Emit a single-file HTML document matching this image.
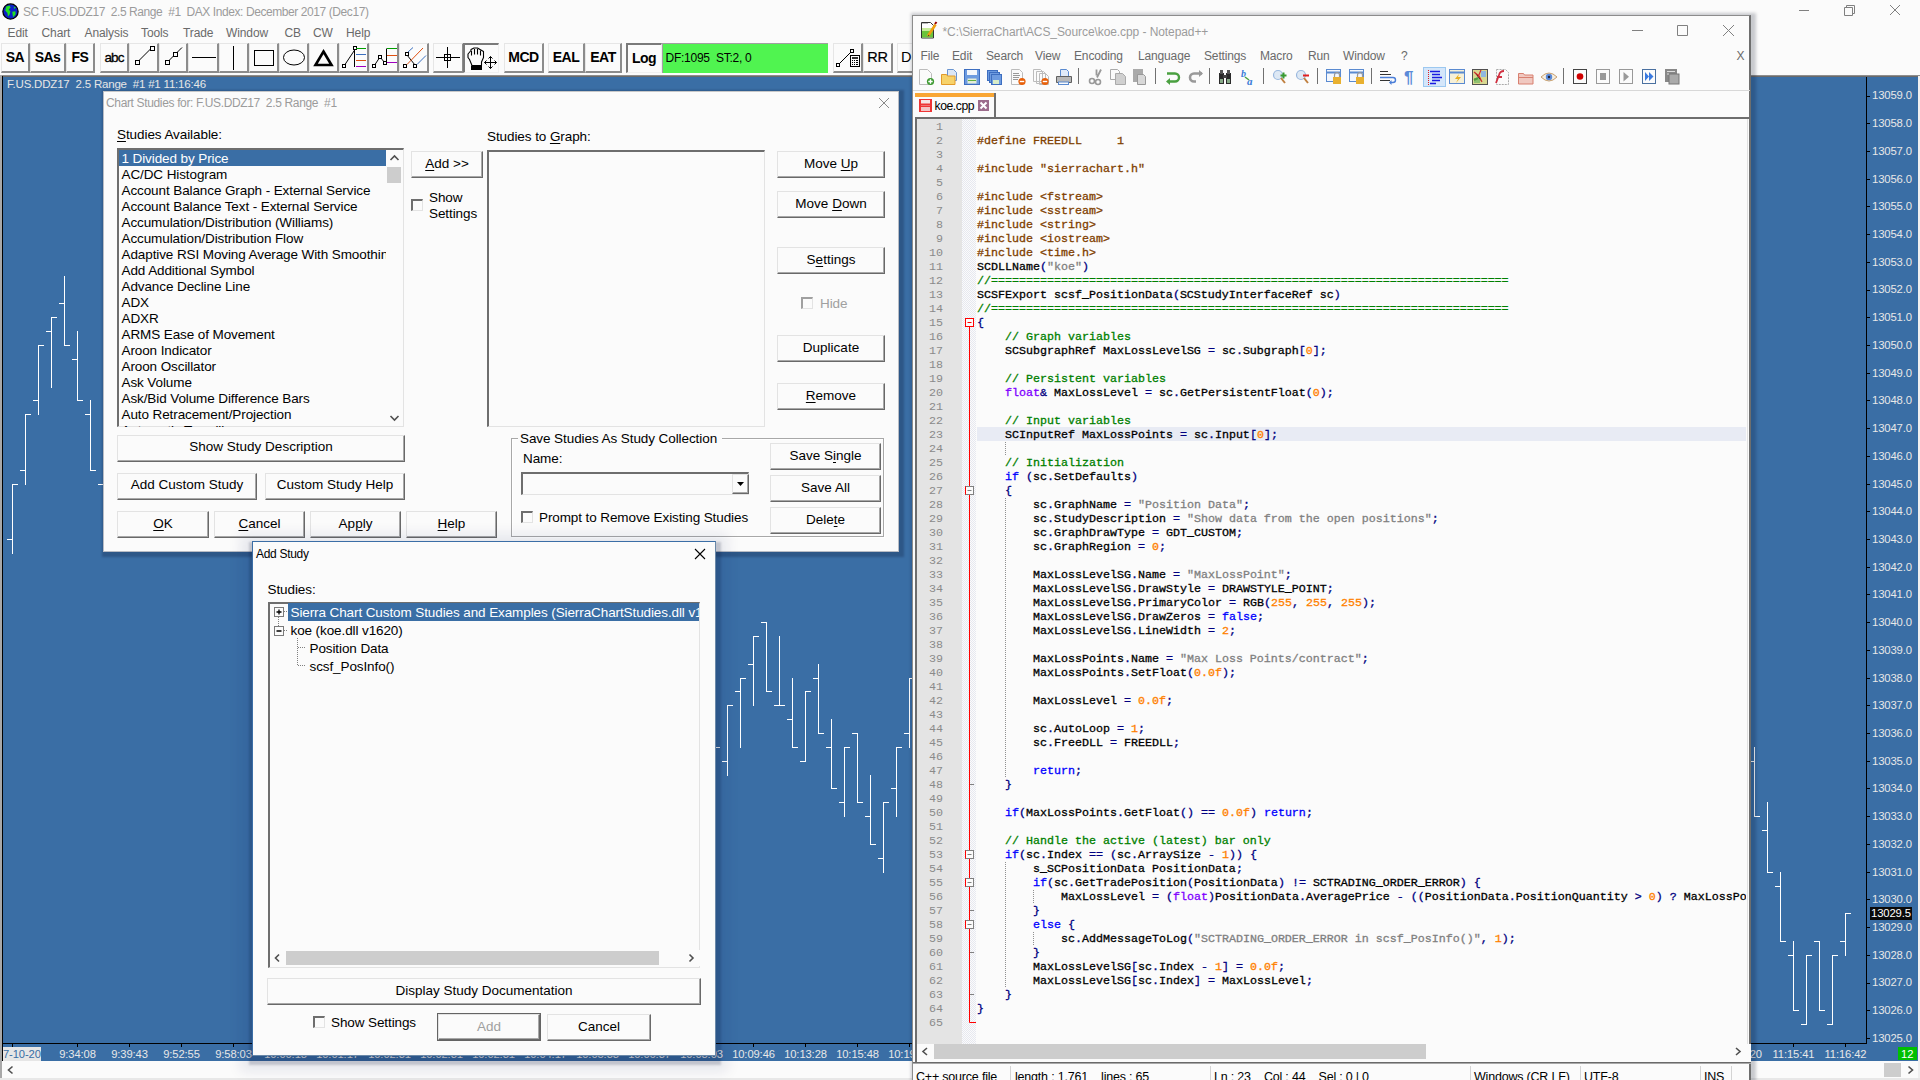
<!DOCTYPE html>
<html><head><meta charset="utf-8">
<style>
*{box-sizing:border-box;margin:0;padding:0}
html,body{width:1920px;height:1080px;overflow:hidden;background:#fbfbfb;font-family:"Liberation Sans",sans-serif;color:#000}
.a{position:absolute}
.t{position:absolute;white-space:pre;line-height:1}
.btn{position:absolute;background:#fbfbfb;border-top:1px solid #e3e3e3;border-left:1px solid #e3e3e3;border-right:1px solid #696969;border-bottom:1px solid #696969;box-shadow:inset -1px -1px 0 #a8a8a8}
.code{font-size:11.67px;font-family:'Liberation Mono',monospace;-webkit-text-stroke:0.3px currentColor}
.code span{-webkit-text-stroke:0.3px currentColor}
.code b{-webkit-text-stroke:0}
u{text-decoration:underline;text-underline-offset:2px;text-decoration-thickness:1px}
</style></head><body>
<svg class="a" style="left:1px;top:2px" width="19" height="19" viewBox="0 0 19 19"><circle cx="9.5" cy="9.5" r="7.6" fill="#0b21c8" stroke="#000" stroke-width="1.3"/><path d="M5.2 4.6 L8.6 3.4 L9.6 5.6 L7.8 7.6 L9.4 9.6 L8.6 12.4 L7 14.6 L6.4 11 L4.2 8.4Z M11.2 9.8 L14.4 9.2 L14.6 12.6 L12 15.2Z M12.6 4.4 L14.8 5.6 L13.4 7Z" fill="#22e022"/></svg><div class="t" style="left:23px;top:6.04px;font-size:12px;color:#9b9b9b;font-weight:400;font-family:'Liberation Sans',sans-serif;letter-spacing:-0.42px">SC F.US.DDZ17  2.5 Range  #1  DAX Index: December 2017 (Dec17)</div><svg class="a" style="left:1790px;top:0" width="130" height="22"><path d="M9 10.5h10" stroke="#808080" stroke-width="1"/><path d="M54.5 7.5h8v8h-8z M56.5 7.5v-2h8v8h-2" fill="none" stroke="#808080"/><path d="M100 5l10 10 M110 5l-10 10" stroke="#808080"/></svg><div class="t" style="left:7.5px;top:26.84px;font-size:12px;color:#6a6a6a;font-weight:400;font-family:'Liberation Sans',sans-serif;letter-spacing:-0.1px">Edit</div><div class="t" style="left:41.5px;top:26.84px;font-size:12px;color:#6a6a6a;font-weight:400;font-family:'Liberation Sans',sans-serif;letter-spacing:-0.1px">Chart</div><div class="t" style="left:84.5px;top:26.84px;font-size:12px;color:#6a6a6a;font-weight:400;font-family:'Liberation Sans',sans-serif;letter-spacing:-0.1px">Analysis</div><div class="t" style="left:141px;top:26.84px;font-size:12px;color:#6a6a6a;font-weight:400;font-family:'Liberation Sans',sans-serif;letter-spacing:-0.1px">Tools</div><div class="t" style="left:183px;top:26.84px;font-size:12px;color:#6a6a6a;font-weight:400;font-family:'Liberation Sans',sans-serif;letter-spacing:-0.1px">Trade</div><div class="t" style="left:226px;top:26.84px;font-size:12px;color:#6a6a6a;font-weight:400;font-family:'Liberation Sans',sans-serif;letter-spacing:-0.1px">Window</div><div class="t" style="left:284.5px;top:26.84px;font-size:12px;color:#6a6a6a;font-weight:400;font-family:'Liberation Sans',sans-serif;letter-spacing:-0.1px">CB</div><div class="t" style="left:313px;top:26.84px;font-size:12px;color:#6a6a6a;font-weight:400;font-family:'Liberation Sans',sans-serif;letter-spacing:-0.1px">CW</div><div class="t" style="left:346px;top:26.84px;font-size:12px;color:#6a6a6a;font-weight:400;font-family:'Liberation Sans',sans-serif;letter-spacing:-0.1px">Help</div><div class="a" style="left:1px;top:43px;width:29px;height:30px;background:#fbfbfb;border-top:1px solid #e6e6e6;border-left:1px solid #e6e6e6;border-right:2px solid #8c8c8c;border-bottom:2px solid #8c8c8c"></div><div class="a" style="left:30px;top:43px;width:36px;height:30px;background:#fbfbfb;border-top:1px solid #e6e6e6;border-left:1px solid #e6e6e6;border-right:2px solid #8c8c8c;border-bottom:2px solid #8c8c8c"></div><div class="a" style="left:66px;top:43px;width:29px;height:30px;background:#fbfbfb;border-top:1px solid #e6e6e6;border-left:1px solid #e6e6e6;border-right:2px solid #8c8c8c;border-bottom:2px solid #8c8c8c"></div><div class="a" style="left:100px;top:43px;width:29px;height:30px;background:#fbfbfb;border-top:1px solid #e6e6e6;border-left:1px solid #e6e6e6;border-right:2px solid #8c8c8c;border-bottom:2px solid #8c8c8c"></div><div class="a" style="left:129px;top:43px;width:30px;height:30px;background:#fbfbfb;border-top:1px solid #e6e6e6;border-left:1px solid #e6e6e6;border-right:2px solid #8c8c8c;border-bottom:2px solid #8c8c8c"></div><div class="a" style="left:159px;top:43px;width:29px;height:30px;background:#fbfbfb;border-top:1px solid #e6e6e6;border-left:1px solid #e6e6e6;border-right:2px solid #8c8c8c;border-bottom:2px solid #8c8c8c"></div><div class="a" style="left:188px;top:43px;width:31px;height:30px;background:#fbfbfb;border-top:1px solid #e6e6e6;border-left:1px solid #e6e6e6;border-right:2px solid #8c8c8c;border-bottom:2px solid #8c8c8c"></div><div class="a" style="left:219px;top:43px;width:30px;height:30px;background:#fbfbfb;border-top:1px solid #e6e6e6;border-left:1px solid #e6e6e6;border-right:2px solid #8c8c8c;border-bottom:2px solid #8c8c8c"></div><div class="a" style="left:249px;top:43px;width:30px;height:30px;background:#fbfbfb;border-top:1px solid #e6e6e6;border-left:1px solid #e6e6e6;border-right:2px solid #8c8c8c;border-bottom:2px solid #8c8c8c"></div><div class="a" style="left:279px;top:43px;width:30px;height:30px;background:#fbfbfb;border-top:1px solid #e6e6e6;border-left:1px solid #e6e6e6;border-right:2px solid #8c8c8c;border-bottom:2px solid #8c8c8c"></div><div class="a" style="left:309px;top:43px;width:30px;height:30px;background:#fbfbfb;border-top:1px solid #e6e6e6;border-left:1px solid #e6e6e6;border-right:2px solid #8c8c8c;border-bottom:2px solid #8c8c8c"></div><div class="a" style="left:339px;top:43px;width:30px;height:30px;background:#fbfbfb;border-top:1px solid #e6e6e6;border-left:1px solid #e6e6e6;border-right:2px solid #8c8c8c;border-bottom:2px solid #8c8c8c"></div><div class="a" style="left:369px;top:43px;width:30px;height:30px;background:#fbfbfb;border-top:1px solid #e6e6e6;border-left:1px solid #e6e6e6;border-right:2px solid #8c8c8c;border-bottom:2px solid #8c8c8c"></div><div class="a" style="left:399px;top:43px;width:30px;height:30px;background:#fbfbfb;border-top:1px solid #e6e6e6;border-left:1px solid #e6e6e6;border-right:2px solid #8c8c8c;border-bottom:2px solid #8c8c8c"></div><div class="a" style="left:433px;top:43px;width:31px;height:30px;background:#fbfbfb;border-top:1px solid #e6e6e6;border-left:1px solid #e6e6e6;border-right:2px solid #8c8c8c;border-bottom:2px solid #8c8c8c"></div><div class="a" style="left:463px;top:43px;width:36px;height:30px;background:#fbfbfb;border-top:2px solid #7a7a7a;border-left:2px solid #7a7a7a;border-right:1px solid #f0f0f0;border-bottom:1px solid #f0f0f0"></div><div class="a" style="left:504px;top:43px;width:40px;height:30px;background:#fbfbfb;border-top:1px solid #e6e6e6;border-left:1px solid #e6e6e6;border-right:2px solid #8c8c8c;border-bottom:2px solid #8c8c8c"></div><div class="a" style="left:548px;top:43px;width:37px;height:30px;background:#fbfbfb;border-top:1px solid #e6e6e6;border-left:1px solid #e6e6e6;border-right:2px solid #8c8c8c;border-bottom:2px solid #8c8c8c"></div><div class="a" style="left:585px;top:43px;width:37px;height:30px;background:#fbfbfb;border-top:1px solid #e6e6e6;border-left:1px solid #e6e6e6;border-right:2px solid #8c8c8c;border-bottom:2px solid #8c8c8c"></div><div class="a" style="left:626px;top:43px;width:36px;height:30px;background:#fbfbfb;border-top:2px solid #7a7a7a;border-left:2px solid #7a7a7a;border-right:1px solid #f0f0f0;border-bottom:1px solid #f0f0f0"></div><div class="a" style="left:833px;top:43px;width:30px;height:30px;background:#fbfbfb;border-top:1px solid #e6e6e6;border-left:1px solid #e6e6e6;border-right:2px solid #8c8c8c;border-bottom:2px solid #8c8c8c"></div><div class="a" style="left:863px;top:43px;width:30px;height:30px;background:#fbfbfb;border-top:1px solid #e6e6e6;border-left:1px solid #e6e6e6;border-right:2px solid #8c8c8c;border-bottom:2px solid #8c8c8c"></div><div class="a" style="left:897px;top:43px;width:34px;height:30px;background:#fbfbfb;border-top:1px solid #e6e6e6;border-left:1px solid #e6e6e6;border-right:2px solid #8c8c8c;border-bottom:2px solid #8c8c8c"></div><div class="t" style="left:0.5px;width:29px;text-align:center;top:50.15px;font-size:14px;color:#000;font-weight:700;font-family:'Liberation Sans',sans-serif;letter-spacing:-0.5px">SA</div><div class="t" style="left:29.5px;width:36px;text-align:center;top:50.15px;font-size:14px;color:#000;font-weight:700;font-family:'Liberation Sans',sans-serif;letter-spacing:-0.5px">SAs</div><div class="t" style="left:65.5px;width:29px;text-align:center;top:50.15px;font-size:14px;color:#000;font-weight:700;font-family:'Liberation Sans',sans-serif;letter-spacing:-0.5px">FS</div><div class="t" style="left:503.5px;width:40px;text-align:center;top:50.15px;font-size:14px;color:#000;font-weight:700;font-family:'Liberation Sans',sans-serif;letter-spacing:-0.5px">MCD</div><div class="t" style="left:547.5px;width:37px;text-align:center;top:50.15px;font-size:14px;color:#000;font-weight:700;font-family:'Liberation Sans',sans-serif;letter-spacing:-0.5px">EAL</div><div class="t" style="left:584.5px;width:37px;text-align:center;top:50.15px;font-size:14px;color:#000;font-weight:700;font-family:'Liberation Sans',sans-serif;letter-spacing:-0.5px">EAT</div><div class="t" style="left:862.5px;width:30px;text-align:center;top:49.73px;font-size:14.5px;color:#000;font-weight:400;font-family:'Liberation Sans',sans-serif;letter-spacing:-0.3px;-webkit-text-stroke:0.2px #000">RR</div><div class="t" style="left:901px;top:49.73px;font-size:14.5px;color:#000;font-weight:400;font-family:'Liberation Sans',sans-serif;">Dr</div><div class="t" style="left:100.0px;width:28px;text-align:center;top:50.57px;font-size:13.5px;color:#000;font-weight:400;font-family:'Liberation Sans',sans-serif;letter-spacing:-0.9px;-webkit-text-stroke:0.3px #000">abc</div><div class="t" style="left:626.0px;width:36px;text-align:center;top:51.15px;font-size:14px;color:#000;font-weight:700;font-family:'Liberation Sans',sans-serif;letter-spacing:-0.5px">Log</div><svg class="a" style="left:0;top:40px" width="920" height="36" viewBox="0 40 920 36">
<g fill="none" stroke="#000" stroke-width="1">
<path d="M137 62.5 L150.5 49"/><rect x="135.5" y="60.5" width="4" height="4" fill="#fbfbfb"/><rect x="150.5" y="46.5" width="4" height="4" fill="#fbfbfb"/>
<path d="M167 62.5 L182 47.5"/><rect x="165.5" y="60.5" width="4" height="4" fill="#fbfbfb"/><rect x="173.5" y="52.5" width="4" height="4" fill="#fbfbfb"/>
<path d="M192 57.5h24"/>
<path d="M233.5 46v24"/>
<rect x="254.5" y="50.5" width="19" height="15" />
<ellipse cx="294" cy="57.5" rx="10.5" ry="7.5"/>
<path d="M323.5 51.5 L331.5 65 L315.5 65Z" stroke-width="2.6" stroke-linejoin="miter"/>
<path d="M344 66 L355 49.5 M354.5 48 V67"/><rect x="342.5" y="64.5" width="3" height="3" fill="#fbfbfb"/><rect x="353.5" y="46.5" width="3" height="3" fill="#fbfbfb"/>
<path d="M374 66 L380 57 L385 63 M386.5 48.5 V63"/><rect x="372.5" y="64.5" width="3" height="3" fill="#fbfbfb"/><rect x="378.5" y="55.5" width="3" height="3" fill="#fbfbfb"/><rect x="383.5" y="61.5" width="3" height="3" fill="#fbfbfb"/>
<path d="M407 55 L415 65"/><rect x="405.5" y="52.5" width="3" height="3" fill="#fbfbfb"/><rect x="413.5" y="64.5" width="3" height="3" fill="#fbfbfb"/><rect x="403.5" y="64.5" width="3" height="3" fill="#fbfbfb"/>
<path d="M436 57.5h24 M447.5 47v21"/><rect x="444.5" y="54.5" width="6" height="6"/>
<path d="M838 65 L852 51"/><rect x="836.5" y="63.5" width="3" height="3" fill="#fbfbfb"/><rect x="850.5" y="49.5" width="3" height="3" fill="#fbfbfb"/><rect x="850.5" y="55.5" width="9" height="11" fill="#fbfbfb"/><path d="M852 58h6" stroke-width="1.6"/>
</g>
<g fill="none" stroke-width="1">
<path d="M356 48.5h10" stroke="#00a000"/><path d="M356 54.5h10" stroke="#3a70c0"/><path d="M356 60.5h10" stroke="#e05010"/><path d="M356 66.5h10" stroke="#a000c0"/>
<path d="M387 48.5h10" stroke="#00a000"/><path d="M387 55.5h10" stroke="#e05010"/><path d="M387 62.5h10" stroke="#a000c0"/>
<path d="M408 52 L413 47.5" stroke="#3a70c0"/><path d="M407 64.5 L423 48" stroke="#e05010"/><path d="M417 64.5 L426 55.5" stroke="#3a70c0"/>
</g>
<g fill="#000"><rect x="852" y="60" width="1" height="1"/><rect x="854" y="60" width="1" height="1"/><rect x="856" y="60" width="2" height="1"/><rect x="852" y="62" width="1" height="1"/><rect x="854" y="62" width="1" height="1"/><rect x="856" y="62" width="2" height="1"/><rect x="852" y="64" width="1" height="1"/><rect x="854" y="64" width="1" height="1"/><rect x="856" y="64" width="2" height="1"/></g>
<path d="M472 65.5 L469.5 59.5 L468 57.5 V54 L471 50.5 V49.5 L474 48 H477.5 L480 49.5 L483.5 51.5 V57.5 L481.5 62 V65.5 Z" fill="#fbfbfb" stroke="#000" stroke-width="1.1" stroke-linejoin="round"/>
<path d="M471.5 51 V55.5 M474.5 49 V54.5 M477.5 49 V54.5 M480.5 50.5 V55.5" stroke="#000" stroke-width="1.1"/>
<rect x="471" y="65.5" width="11" height="4.5" fill="#000"/>
<path d="M484.5 62.5 H496.5 M490.5 56.5 V68.5 M486.5 60.5 L484.5 62.5 L486.5 64.5 M494.5 60.5 L496.5 62.5 L494.5 64.5 M488.5 58.5 L490.5 56.5 L492.5 58.5 M488.5 66.5 L490.5 68.5 L492.5 66.5" fill="none" stroke="#000" stroke-width="1"/>
</svg><div class="a" style="left:662px;top:43px;width:166px;height:30px;background:#50f450;border-top:1px solid #a0a0a0;border-left:1px solid #a0a0a0"></div><div class="t" style="left:665.5px;top:52.34px;font-size:12px;color:#000;font-weight:400;font-family:'Liberation Sans',sans-serif;letter-spacing:-0.25px">DF:1095  ST:2, 0</div><div class="a" style="left:0px;top:75px;width:1920px;height:2px;background:#6a6a6a;border-top:1px solid #8e8e8e"></div><div class="a" style="left:0px;top:75px;width:2px;height:1005px;background:#a8a8a8"></div><div class="a" style="left:2px;top:76px;width:1px;height:985px;background:#000"></div><div class="a" style="left:3px;top:77px;width:1915px;height:984px;background:#3a6ea5"></div><div class="a" style="left:1918px;top:76px;width:2px;height:1004px;background:#f0f0f0"></div><div class="t" style="left:7px;top:79.27px;font-size:11.5px;color:#e6e6e6;font-weight:400;font-family:'Liberation Sans',sans-serif;letter-spacing:-0.2px">F.US.DDZ17  2.5 Range  #1 #1 11:16:46</div><div class="a" style="left:1866px;top:77px;width:1px;height:967px;background:#000"></div><div class="a" style="left:3px;top:1043px;width:1864px;height:1px;background:#000"></div><svg class="a" style="left:0;top:0" width="1920" height="1080"><g stroke="#000" stroke-width="1"><path d="M1867 96.5h3"/><path d="M1867 123.5h3"/><path d="M1867 151.5h3"/><path d="M1867 179.5h3"/><path d="M1867 206.5h3"/><path d="M1867 234.5h3"/><path d="M1867 262.5h3"/><path d="M1867 290.5h3"/><path d="M1867 317.5h3"/><path d="M1867 345.5h3"/><path d="M1867 373.5h3"/><path d="M1867 400.5h3"/><path d="M1867 428.5h3"/><path d="M1867 456.5h3"/><path d="M1867 484.5h3"/><path d="M1867 511.5h3"/><path d="M1867 539.5h3"/><path d="M1867 567.5h3"/><path d="M1867 594.5h3"/><path d="M1867 622.5h3"/><path d="M1867 650.5h3"/><path d="M1867 678.5h3"/><path d="M1867 705.5h3"/><path d="M1867 733.5h3"/><path d="M1867 761.5h3"/><path d="M1867 788.5h3"/><path d="M1867 816.5h3"/><path d="M1867 844.5h3"/><path d="M1867 872.5h3"/><path d="M1867 899.5h3"/><path d="M1867 927.5h3"/><path d="M1867 955.5h3"/><path d="M1867 983.5h3"/><path d="M1867 1010.5h3"/><path d="M1867 1038.5h3"/><path d="M77.5 1044v3"/><path d="M233.5 1044v3"/><path d="M285.5 1044v3"/><path d="M337.5 1044v3"/><path d="M389.5 1044v3"/><path d="M441.5 1044v3"/><path d="M493.5 1044v3"/><path d="M545.5 1044v3"/><path d="M597.5 1044v3"/><path d="M649.5 1044v3"/><path d="M701.5 1044v3"/><path d="M753.5 1044v3"/><path d="M805.5 1044v3"/><path d="M857.5 1044v3"/><path d="M909.5 1044v3"/><path d="M961.5 1044v3"/><path d="M1013.5 1044v3"/><path d="M1065.5 1044v3"/><path d="M1117.5 1044v3"/><path d="M1169.5 1044v3"/><path d="M1221.5 1044v3"/><path d="M1273.5 1044v3"/><path d="M1325.5 1044v3"/><path d="M1377.5 1044v3"/><path d="M1429.5 1044v3"/><path d="M1481.5 1044v3"/><path d="M1533.5 1044v3"/><path d="M1585.5 1044v3"/><path d="M1637.5 1044v3"/><path d="M1689.5 1044v3"/><path d="M1741.5 1044v3"/><path d="M1793.5 1044v3"/><path d="M1845.5 1044v3"/><path d="M12.5 1044v3"/><path d="M129.5 1044v3"/><path d="M181.5 1044v3"/></g><g stroke="#ffffff" stroke-width="1" fill="none" shape-rendering="crispEdges"><path d="M12.5 484V554 M7 539.5h5 M13 484.5h5"/><path d="M25.5 414V485 M20 470.5h5 M26 414.5h5"/><path d="M38.5 345V415 M33 400.5h5 M39 345.5h5"/><path d="M51.5 317V388 M46 331.5h5 M52 317.5h5"/><path d="M64.5 276V346 M59 303.5h5 M65 345.5h5"/><path d="M77.5 331V401 M72 359.5h5 M78 400.5h5"/><path d="M90.5 400V471 M85 414.5h5 M91 470.5h5"/><path d="M103.5 442V485 M98 484.5h5 M104 456.5h5"/><path d="M714.5 733V762 M709 747.5h5 M715 747.5h5"/><path d="M727.5 705V776 M722 761.5h5 M728 705.5h5"/><path d="M740.5 678V748 M735 691.5h5 M741 678.5h5"/><path d="M753.5 636V706 M748 664.5h5 M754 636.5h5"/><path d="M766.5 622V692 M761 622.5h5 M767 691.5h5"/><path d="M779.5 636V706 M774 705.5h5 M780 705.5h5"/><path d="M792.5 678V748 M787 719.5h5 M793 747.5h5"/><path d="M805.5 691V762 M800 761.5h5 M806 691.5h5"/><path d="M818.5 664V734 M813 678.5h5 M819 733.5h5"/><path d="M831.5 719V789 M826 747.5h5 M832 788.5h5"/><path d="M844.5 747V817 M839 802.5h5 M845 747.5h5"/><path d="M857.5 733V803 M852 733.5h5 M858 802.5h5"/><path d="M870.5 775V845 M865 816.5h5 M871 844.5h5"/><path d="M883.5 802V873 M878 858.5h5 M884 802.5h5"/><path d="M896.5 747V817 M891 788.5h5 M897 747.5h5"/><path d="M909.5 678V748 M904 733.5h5 M910 678.5h5"/><path d="M1754.5 747V817 M1749 761.5h5 M1755 816.5h5"/><path d="M1767.5 802V873 M1762 830.5h5 M1768 872.5h5"/><path d="M1780.5 872V942 M1775 886.5h5 M1781 941.5h5"/><path d="M1793.5 941V1011 M1788 955.5h5 M1794 1010.5h5"/><path d="M1806.5 955V1025 M1801 1024.5h5 M1807 955.5h5"/><path d="M1819.5 941V1011 M1814 941.5h5 M1820 1010.5h5"/><path d="M1832.5 955V1025 M1827 1024.5h5 M1833 955.5h5"/><path d="M1845.5 913V956 M1840 941.5h5 M1846 913.5h5"/></g></svg><div class="t" style="left:1872px;top:90.43px;font-size:11.3px;color:#e8e8e8;font-weight:400;font-family:'Liberation Sans',sans-serif;letter-spacing:-0.15px">13059.0</div><div class="t" style="left:1872px;top:118.15px;font-size:11.3px;color:#e8e8e8;font-weight:400;font-family:'Liberation Sans',sans-serif;letter-spacing:-0.15px">13058.0</div><div class="t" style="left:1872px;top:145.87px;font-size:11.3px;color:#e8e8e8;font-weight:400;font-family:'Liberation Sans',sans-serif;letter-spacing:-0.15px">13057.0</div><div class="t" style="left:1872px;top:173.59px;font-size:11.3px;color:#e8e8e8;font-weight:400;font-family:'Liberation Sans',sans-serif;letter-spacing:-0.15px">13056.0</div><div class="t" style="left:1872px;top:201.31px;font-size:11.3px;color:#e8e8e8;font-weight:400;font-family:'Liberation Sans',sans-serif;letter-spacing:-0.15px">13055.0</div><div class="t" style="left:1872px;top:229.03px;font-size:11.3px;color:#e8e8e8;font-weight:400;font-family:'Liberation Sans',sans-serif;letter-spacing:-0.15px">13054.0</div><div class="t" style="left:1872px;top:256.75px;font-size:11.3px;color:#e8e8e8;font-weight:400;font-family:'Liberation Sans',sans-serif;letter-spacing:-0.15px">13053.0</div><div class="t" style="left:1872px;top:284.47px;font-size:11.3px;color:#e8e8e8;font-weight:400;font-family:'Liberation Sans',sans-serif;letter-spacing:-0.15px">13052.0</div><div class="t" style="left:1872px;top:312.19px;font-size:11.3px;color:#e8e8e8;font-weight:400;font-family:'Liberation Sans',sans-serif;letter-spacing:-0.15px">13051.0</div><div class="t" style="left:1872px;top:339.91px;font-size:11.3px;color:#e8e8e8;font-weight:400;font-family:'Liberation Sans',sans-serif;letter-spacing:-0.15px">13050.0</div><div class="t" style="left:1872px;top:367.63px;font-size:11.3px;color:#e8e8e8;font-weight:400;font-family:'Liberation Sans',sans-serif;letter-spacing:-0.15px">13049.0</div><div class="t" style="left:1872px;top:395.35px;font-size:11.3px;color:#e8e8e8;font-weight:400;font-family:'Liberation Sans',sans-serif;letter-spacing:-0.15px">13048.0</div><div class="t" style="left:1872px;top:423.07px;font-size:11.3px;color:#e8e8e8;font-weight:400;font-family:'Liberation Sans',sans-serif;letter-spacing:-0.15px">13047.0</div><div class="t" style="left:1872px;top:450.79px;font-size:11.3px;color:#e8e8e8;font-weight:400;font-family:'Liberation Sans',sans-serif;letter-spacing:-0.15px">13046.0</div><div class="t" style="left:1872px;top:478.51px;font-size:11.3px;color:#e8e8e8;font-weight:400;font-family:'Liberation Sans',sans-serif;letter-spacing:-0.15px">13045.0</div><div class="t" style="left:1872px;top:506.23px;font-size:11.3px;color:#e8e8e8;font-weight:400;font-family:'Liberation Sans',sans-serif;letter-spacing:-0.15px">13044.0</div><div class="t" style="left:1872px;top:533.95px;font-size:11.3px;color:#e8e8e8;font-weight:400;font-family:'Liberation Sans',sans-serif;letter-spacing:-0.15px">13043.0</div><div class="t" style="left:1872px;top:561.67px;font-size:11.3px;color:#e8e8e8;font-weight:400;font-family:'Liberation Sans',sans-serif;letter-spacing:-0.15px">13042.0</div><div class="t" style="left:1872px;top:589.39px;font-size:11.3px;color:#e8e8e8;font-weight:400;font-family:'Liberation Sans',sans-serif;letter-spacing:-0.15px">13041.0</div><div class="t" style="left:1872px;top:617.11px;font-size:11.3px;color:#e8e8e8;font-weight:400;font-family:'Liberation Sans',sans-serif;letter-spacing:-0.15px">13040.0</div><div class="t" style="left:1872px;top:644.83px;font-size:11.3px;color:#e8e8e8;font-weight:400;font-family:'Liberation Sans',sans-serif;letter-spacing:-0.15px">13039.0</div><div class="t" style="left:1872px;top:672.55px;font-size:11.3px;color:#e8e8e8;font-weight:400;font-family:'Liberation Sans',sans-serif;letter-spacing:-0.15px">13038.0</div><div class="t" style="left:1872px;top:700.27px;font-size:11.3px;color:#e8e8e8;font-weight:400;font-family:'Liberation Sans',sans-serif;letter-spacing:-0.15px">13037.0</div><div class="t" style="left:1872px;top:727.99px;font-size:11.3px;color:#e8e8e8;font-weight:400;font-family:'Liberation Sans',sans-serif;letter-spacing:-0.15px">13036.0</div><div class="t" style="left:1872px;top:755.71px;font-size:11.3px;color:#e8e8e8;font-weight:400;font-family:'Liberation Sans',sans-serif;letter-spacing:-0.15px">13035.0</div><div class="t" style="left:1872px;top:783.43px;font-size:11.3px;color:#e8e8e8;font-weight:400;font-family:'Liberation Sans',sans-serif;letter-spacing:-0.15px">13034.0</div><div class="t" style="left:1872px;top:811.15px;font-size:11.3px;color:#e8e8e8;font-weight:400;font-family:'Liberation Sans',sans-serif;letter-spacing:-0.15px">13033.0</div><div class="t" style="left:1872px;top:838.87px;font-size:11.3px;color:#e8e8e8;font-weight:400;font-family:'Liberation Sans',sans-serif;letter-spacing:-0.15px">13032.0</div><div class="t" style="left:1872px;top:866.59px;font-size:11.3px;color:#e8e8e8;font-weight:400;font-family:'Liberation Sans',sans-serif;letter-spacing:-0.15px">13031.0</div><div class="t" style="left:1872px;top:894.31px;font-size:11.3px;color:#e8e8e8;font-weight:400;font-family:'Liberation Sans',sans-serif;letter-spacing:-0.15px">13030.0</div><div class="t" style="left:1872px;top:922.03px;font-size:11.3px;color:#e8e8e8;font-weight:400;font-family:'Liberation Sans',sans-serif;letter-spacing:-0.15px">13029.0</div><div class="t" style="left:1872px;top:949.75px;font-size:11.3px;color:#e8e8e8;font-weight:400;font-family:'Liberation Sans',sans-serif;letter-spacing:-0.15px">13028.0</div><div class="t" style="left:1872px;top:977.47px;font-size:11.3px;color:#e8e8e8;font-weight:400;font-family:'Liberation Sans',sans-serif;letter-spacing:-0.15px">13027.0</div><div class="t" style="left:1872px;top:1005.19px;font-size:11.3px;color:#e8e8e8;font-weight:400;font-family:'Liberation Sans',sans-serif;letter-spacing:-0.15px">13026.0</div><div class="t" style="left:1872px;top:1032.91px;font-size:11.3px;color:#e8e8e8;font-weight:400;font-family:'Liberation Sans',sans-serif;letter-spacing:-0.15px">13025.0</div><div class="a" style="left:1870px;top:907px;width:42px;height:13px;background:#0a0a0a"></div><div class="t" style="left:1871px;top:908.43px;font-size:11.3px;color:#ffffff;font-weight:400;font-family:'Liberation Sans',sans-serif;letter-spacing:-0.15px">13029.5</div><div class="a" style="left:3px;top:1047px;width:38px;height:14px;background:#e6e6e6"></div><div class="t" style="left:3px;top:1048.52px;font-size:11.2px;color:#3a6ea5;font-weight:400;font-family:'Liberation Sans',sans-serif;letter-spacing:-0.1px">7-10-20</div><div class="t" style="left:47.5px;width:60px;text-align:center;top:1048.52px;font-size:11.2px;color:#e8e8e8;font-weight:400;font-family:'Liberation Sans',sans-serif;letter-spacing:-0.1px">9:34:08</div><div class="t" style="left:99.5px;width:60px;text-align:center;top:1048.52px;font-size:11.2px;color:#e8e8e8;font-weight:400;font-family:'Liberation Sans',sans-serif;letter-spacing:-0.1px">9:39:43</div><div class="t" style="left:151.5px;width:60px;text-align:center;top:1048.52px;font-size:11.2px;color:#e8e8e8;font-weight:400;font-family:'Liberation Sans',sans-serif;letter-spacing:-0.1px">9:52:55</div><div class="t" style="left:203.5px;width:60px;text-align:center;top:1048.52px;font-size:11.2px;color:#e8e8e8;font-weight:400;font-family:'Liberation Sans',sans-serif;letter-spacing:-0.1px">9:58:03</div><div class="t" style="left:255.5px;width:60px;text-align:center;top:1048.52px;font-size:11.2px;color:#e8e8e8;font-weight:400;font-family:'Liberation Sans',sans-serif;letter-spacing:-0.1px">10:00:18</div><div class="t" style="left:307.5px;width:60px;text-align:center;top:1048.52px;font-size:11.2px;color:#e8e8e8;font-weight:400;font-family:'Liberation Sans',sans-serif;letter-spacing:-0.1px">10:01:17</div><div class="t" style="left:359.5px;width:60px;text-align:center;top:1048.52px;font-size:11.2px;color:#e8e8e8;font-weight:400;font-family:'Liberation Sans',sans-serif;letter-spacing:-0.1px">10:02:31</div><div class="t" style="left:411.5px;width:60px;text-align:center;top:1048.52px;font-size:11.2px;color:#e8e8e8;font-weight:400;font-family:'Liberation Sans',sans-serif;letter-spacing:-0.1px">10:02:31</div><div class="t" style="left:463.5px;width:60px;text-align:center;top:1048.52px;font-size:11.2px;color:#e8e8e8;font-weight:400;font-family:'Liberation Sans',sans-serif;letter-spacing:-0.1px">10:02:31</div><div class="t" style="left:515.5px;width:60px;text-align:center;top:1048.52px;font-size:11.2px;color:#e8e8e8;font-weight:400;font-family:'Liberation Sans',sans-serif;letter-spacing:-0.1px">10:04:17</div><div class="t" style="left:567.5px;width:60px;text-align:center;top:1048.52px;font-size:11.2px;color:#e8e8e8;font-weight:400;font-family:'Liberation Sans',sans-serif;letter-spacing:-0.1px">10:05:33</div><div class="t" style="left:619.5px;width:60px;text-align:center;top:1048.52px;font-size:11.2px;color:#e8e8e8;font-weight:400;font-family:'Liberation Sans',sans-serif;letter-spacing:-0.1px">10:06:37</div><div class="t" style="left:671.5px;width:60px;text-align:center;top:1048.52px;font-size:11.2px;color:#e8e8e8;font-weight:400;font-family:'Liberation Sans',sans-serif;letter-spacing:-0.1px">10:08:03</div><div class="t" style="left:723.5px;width:60px;text-align:center;top:1048.52px;font-size:11.2px;color:#e8e8e8;font-weight:400;font-family:'Liberation Sans',sans-serif;letter-spacing:-0.1px">10:09:46</div><div class="t" style="left:775.5px;width:60px;text-align:center;top:1048.52px;font-size:11.2px;color:#e8e8e8;font-weight:400;font-family:'Liberation Sans',sans-serif;letter-spacing:-0.1px">10:13:28</div><div class="t" style="left:827.5px;width:60px;text-align:center;top:1048.52px;font-size:11.2px;color:#e8e8e8;font-weight:400;font-family:'Liberation Sans',sans-serif;letter-spacing:-0.1px">10:15:48</div><div class="t" style="left:879.5px;width:60px;text-align:center;top:1048.52px;font-size:11.2px;color:#e8e8e8;font-weight:400;font-family:'Liberation Sans',sans-serif;letter-spacing:-0.1px">10:19:20</div><div class="t" style="left:1711.0px;width:60px;text-align:center;top:1048.52px;font-size:11.2px;color:#e8e8e8;font-weight:400;font-family:'Liberation Sans',sans-serif;letter-spacing:-0.1px">11:14:20</div><div class="t" style="left:1763.5px;width:60px;text-align:center;top:1048.52px;font-size:11.2px;color:#e8e8e8;font-weight:400;font-family:'Liberation Sans',sans-serif;letter-spacing:-0.1px">11:15:41</div><div class="t" style="left:1815.5px;width:60px;text-align:center;top:1048.52px;font-size:11.2px;color:#e8e8e8;font-weight:400;font-family:'Liberation Sans',sans-serif;letter-spacing:-0.1px">11:16:42</div><div class="a" style="left:1898px;top:1047px;width:19px;height:13px;background:#00c000"></div><div class="t" style="left:1901px;top:1048.52px;font-size:11.2px;color:#ffffff;font-weight:400;font-family:'Liberation Sans',sans-serif;">12</div><div class="a" style="left:3px;top:1061px;width:1915px;height:17px;background:#fbfbfb"></div><div class="a" style="left:0px;top:1078px;width:1920px;height:2px;background:#e8e8e8"></div><svg class="a" style="left:0;top:1060px" width="1920" height="20"><path d="M12.5 6.5 L8.5 10 L12.5 13.5" fill="none" stroke="#505050" stroke-width="1.6"/><path d="M1908.5 6.5 L1912.5 10 L1908.5 13.5" fill="none" stroke="#505050" stroke-width="1.6"/></svg><div class="a" style="left:1884px;top:1063px;width:17px;height:14px;background:#cdcdcd"></div><div class="a" style="left:103px;top:91px;width:796px;height:461px;box-shadow:2px 2px 2px 3px rgba(0,10,30,0.22)"></div><div class="a" style="left:103px;top:91px;width:796px;height:461px;background:#fbfbfb;border:1px solid #b8bcc4;border-top-color:#c8c8c8"></div><div class="t" style="left:106px;top:96.84px;font-size:12px;color:#9b9b9b;font-weight:400;font-family:'Liberation Sans',sans-serif;letter-spacing:-0.35px">Chart Studies for: F.US.DDZ17  2.5 Range  #1</div><svg class="a" style="left:874px;top:93px" width="20" height="20"><path d="M5 5l10 10 M15 5l-10 10" stroke="#8a8a8a" stroke-width="1"/></svg><div class="t" style="left:117px;top:127.57px;font-size:13.5px;color:#000;font-weight:400;font-family:'Liberation Sans',sans-serif;letter-spacing:-0.08px"><u>S</u>tudies Available:</div><div class="a" style="left:117px;top:148px;width:287px;height:279px;background:#fbfbfb;border-top:2px solid #6e6e6e;border-left:2px solid #6e6e6e;border-right:1px solid #e3e3e3;border-bottom:1px solid #e3e3e3"></div><div class="a" style="left:119px;top:150px;width:267px;height:16px;background:#3a6ea5"></div><div class="a" style="left:119px;top:150px;width:267px;height:277px;overflow:hidden"><div class="t" style="left:2.5px;top:1.57px;font-size:13.5px;color:#ffffff;font-weight:400;font-family:'Liberation Sans',sans-serif;letter-spacing:-0.1px">1 Divided by Price</div><div class="t" style="left:2.5px;top:17.57px;font-size:13.5px;color:#000;font-weight:400;font-family:'Liberation Sans',sans-serif;letter-spacing:-0.1px">AC/DC Histogram</div><div class="t" style="left:2.5px;top:33.57px;font-size:13.5px;color:#000;font-weight:400;font-family:'Liberation Sans',sans-serif;letter-spacing:-0.1px">Account Balance Graph - External Service</div><div class="t" style="left:2.5px;top:49.57px;font-size:13.5px;color:#000;font-weight:400;font-family:'Liberation Sans',sans-serif;letter-spacing:-0.1px">Account Balance Text - External Service</div><div class="t" style="left:2.5px;top:65.57px;font-size:13.5px;color:#000;font-weight:400;font-family:'Liberation Sans',sans-serif;letter-spacing:-0.1px">Accumulation/Distribution (Williams)</div><div class="t" style="left:2.5px;top:81.57px;font-size:13.5px;color:#000;font-weight:400;font-family:'Liberation Sans',sans-serif;letter-spacing:-0.1px">Accumulation/Distribution Flow</div><div class="t" style="left:2.5px;top:97.57px;font-size:13.5px;color:#000;font-weight:400;font-family:'Liberation Sans',sans-serif;letter-spacing:-0.1px">Adaptive RSI Moving Average With Smoothing</div><div class="t" style="left:2.5px;top:113.57px;font-size:13.5px;color:#000;font-weight:400;font-family:'Liberation Sans',sans-serif;letter-spacing:-0.1px">Add Additional Symbol</div><div class="t" style="left:2.5px;top:129.57px;font-size:13.5px;color:#000;font-weight:400;font-family:'Liberation Sans',sans-serif;letter-spacing:-0.1px">Advance Decline Line</div><div class="t" style="left:2.5px;top:145.57px;font-size:13.5px;color:#000;font-weight:400;font-family:'Liberation Sans',sans-serif;letter-spacing:-0.1px">ADX</div><div class="t" style="left:2.5px;top:161.57px;font-size:13.5px;color:#000;font-weight:400;font-family:'Liberation Sans',sans-serif;letter-spacing:-0.1px">ADXR</div><div class="t" style="left:2.5px;top:177.57px;font-size:13.5px;color:#000;font-weight:400;font-family:'Liberation Sans',sans-serif;letter-spacing:-0.1px">ARMS Ease of Movement</div><div class="t" style="left:2.5px;top:193.57px;font-size:13.5px;color:#000;font-weight:400;font-family:'Liberation Sans',sans-serif;letter-spacing:-0.1px">Aroon Indicator</div><div class="t" style="left:2.5px;top:209.57px;font-size:13.5px;color:#000;font-weight:400;font-family:'Liberation Sans',sans-serif;letter-spacing:-0.1px">Aroon Oscillator</div><div class="t" style="left:2.5px;top:225.57px;font-size:13.5px;color:#000;font-weight:400;font-family:'Liberation Sans',sans-serif;letter-spacing:-0.1px">Ask Volume</div><div class="t" style="left:2.5px;top:241.57px;font-size:13.5px;color:#000;font-weight:400;font-family:'Liberation Sans',sans-serif;letter-spacing:-0.1px">Ask/Bid Volume Difference Bars</div><div class="t" style="left:2.5px;top:257.57px;font-size:13.5px;color:#000;font-weight:400;font-family:'Liberation Sans',sans-serif;letter-spacing:-0.1px">Auto Retracement/Projection</div><div class="t" style="left:2.5px;top:273.57px;font-size:13.5px;color:#000;font-weight:400;font-family:'Liberation Sans',sans-serif;letter-spacing:-0.1px">Automatic Trendlines</div></div><svg class="a" style="left:386px;top:150px" width="17" height="276"><path d="M4.5 10 L8.5 6 L12.5 10" fill="none" stroke="#505050" stroke-width="1.6"/><rect x="1" y="17" width="14" height="16" fill="#cdcdcd"/><path d="M4.5 266 L8.5 270 L12.5 266" fill="none" stroke="#505050" stroke-width="1.6"/></svg><div class="btn" style="left:411px;top:151px;width:72px;height:27px"></div><div class="t" style="left:411.0px;width:72px;text-align:center;top:156.57px;font-size:13.5px;color:#000;font-weight:400;font-family:'Liberation Sans',sans-serif;"><u>A</u>dd &gt;&gt;</div><div class="a" style="left:411px;top:199px;width:12px;height:12px;border-top:2px solid #6e6e6e;border-left:2px solid #6e6e6e;border-right:1px solid #e3e3e3;border-bottom:1px solid #e3e3e3;background:#fbfbfb"></div><div class="t" style="left:429px;top:190.57px;font-size:13.5px;color:#000;font-weight:400;font-family:'Liberation Sans',sans-serif;letter-spacing:-0.08px">Show</div><div class="t" style="left:429px;top:206.57px;font-size:13.5px;color:#000;font-weight:400;font-family:'Liberation Sans',sans-serif;letter-spacing:-0.08px">Settings</div><div class="t" style="left:487px;top:130.07px;font-size:13.5px;color:#000;font-weight:400;font-family:'Liberation Sans',sans-serif;letter-spacing:-0.08px">Studies to <u>G</u>raph:</div><div class="a" style="left:487px;top:150px;width:278px;height:277px;background:#fbfbfb;border-top:2px solid #6e6e6e;border-left:2px solid #6e6e6e;border-right:1px solid #e3e3e3;border-bottom:1px solid #e3e3e3"></div><div class="btn" style="left:777px;top:151px;width:108px;height:27px"></div><div class="t" style="left:777.0px;width:108px;text-align:center;top:157.07px;font-size:13.5px;color:#000;font-weight:400;font-family:'Liberation Sans',sans-serif;">Move <u>U</u>p</div><div class="btn" style="left:777px;top:191px;width:108px;height:27px"></div><div class="t" style="left:777.0px;width:108px;text-align:center;top:197.07px;font-size:13.5px;color:#000;font-weight:400;font-family:'Liberation Sans',sans-serif;">Move <u>D</u>own</div><div class="btn" style="left:777px;top:247px;width:108px;height:27px"></div><div class="t" style="left:777.0px;width:108px;text-align:center;top:253.07px;font-size:13.5px;color:#000;font-weight:400;font-family:'Liberation Sans',sans-serif;">S<u>e</u>ttings</div><div class="a" style="left:801px;top:297px;width:12px;height:12px;border-top:2px solid #a0a0a0;border-left:2px solid #a0a0a0;border-right:1px solid #e3e3e3;border-bottom:1px solid #e3e3e3;background:#fbfbfb"></div><div class="t" style="left:820px;top:297.07px;font-size:13.5px;color:#a0a0a0;font-weight:400;font-family:'Liberation Sans',sans-serif;letter-spacing:-0.08px">Hide</div><div class="btn" style="left:777px;top:335px;width:108px;height:27px"></div><div class="t" style="left:777.0px;width:108px;text-align:center;top:341.07px;font-size:13.5px;color:#000;font-weight:400;font-family:'Liberation Sans',sans-serif;">Duplicate</div><div class="btn" style="left:777px;top:383px;width:108px;height:27px"></div><div class="t" style="left:777.0px;width:108px;text-align:center;top:389.07px;font-size:13.5px;color:#000;font-weight:400;font-family:'Liberation Sans',sans-serif;"><u>R</u>emove</div><div class="btn" style="left:117px;top:435px;width:288px;height:27px"></div><div class="t" style="left:117.0px;width:288px;text-align:center;top:440.07px;font-size:13.5px;color:#000;font-weight:400;font-family:'Liberation Sans',sans-serif;">Show Study Description</div><div class="btn" style="left:117px;top:473px;width:140px;height:27px"></div><div class="t" style="left:117.0px;width:140px;text-align:center;top:478.07px;font-size:13.5px;color:#000;font-weight:400;font-family:'Liberation Sans',sans-serif;">Add Custom Study</div><div class="btn" style="left:265px;top:473px;width:140px;height:27px"></div><div class="t" style="left:265.0px;width:140px;text-align:center;top:478.07px;font-size:13.5px;color:#000;font-weight:400;font-family:'Liberation Sans',sans-serif;">Custom Study Help</div><div class="btn" style="left:117px;top:511px;width:92px;height:27px"></div><div class="t" style="left:117.0px;width:92px;text-align:center;top:516.57px;font-size:13.5px;color:#000;font-weight:400;font-family:'Liberation Sans',sans-serif;"><u>O</u>K</div><div class="btn" style="left:214px;top:511px;width:91px;height:27px"></div><div class="t" style="left:214.0px;width:91px;text-align:center;top:516.57px;font-size:13.5px;color:#000;font-weight:400;font-family:'Liberation Sans',sans-serif;"><u>C</u>ancel</div><div class="btn" style="left:310px;top:511px;width:91px;height:27px"></div><div class="t" style="left:310.0px;width:91px;text-align:center;top:516.57px;font-size:13.5px;color:#000;font-weight:400;font-family:'Liberation Sans',sans-serif;">Ap<u>p</u>ly</div><div class="btn" style="left:406px;top:511px;width:91px;height:27px"></div><div class="t" style="left:406.0px;width:91px;text-align:center;top:516.57px;font-size:13.5px;color:#000;font-weight:400;font-family:'Liberation Sans',sans-serif;"><u>H</u>elp</div><div class="a" style="left:511px;top:438px;width:373px;height:99px;border:1px solid #a8a8a8;box-shadow:1px 1px 0 #fff, inset 1px 1px 0 #fff"></div><div class="a" style="left:518px;top:430px;width:204px;height:16px;background:#fbfbfb"></div><div class="t" style="left:520px;top:431.57px;font-size:13.5px;color:#000;font-weight:400;font-family:'Liberation Sans',sans-serif;letter-spacing:-0.08px">Save Studies As Study Collection</div><div class="t" style="left:523px;top:451.57px;font-size:13.5px;color:#000;font-weight:400;font-family:'Liberation Sans',sans-serif;letter-spacing:-0.08px">Name:</div><div class="a" style="left:521px;top:472px;width:228px;height:23px;background:#fbfbfb;border-top:2px solid #6e6e6e;border-left:2px solid #6e6e6e;border-right:1px solid #e3e3e3;border-bottom:1px solid #e3e3e3"></div><div class="btn" style="left:732px;top:474px;width:17px;height:20px"></div><svg class="a" style="left:732px;top:474px" width="17" height="19"><path d="M5 8h7l-3.5 4z" fill="#000"/></svg><div class="a" style="left:521px;top:511px;width:12px;height:12px;border-top:2px solid #6e6e6e;border-left:2px solid #6e6e6e;border-right:1px solid #e3e3e3;border-bottom:1px solid #e3e3e3;background:#fbfbfb"></div><div class="t" style="left:539px;top:510.57px;font-size:13.5px;color:#000;font-weight:400;font-family:'Liberation Sans',sans-serif;letter-spacing:-0.1px">Prompt to Remove Existing Studies</div><div class="btn" style="left:770px;top:443px;width:111px;height:27px"></div><div class="t" style="left:770.0px;width:111px;text-align:center;top:449.07px;font-size:13.5px;color:#000;font-weight:400;font-family:'Liberation Sans',sans-serif;">Save S<u>i</u>ngle</div><div class="btn" style="left:770px;top:475px;width:111px;height:27px"></div><div class="t" style="left:770.0px;width:111px;text-align:center;top:481.07px;font-size:13.5px;color:#000;font-weight:400;font-family:'Liberation Sans',sans-serif;">Save All</div><div class="btn" style="left:770px;top:507px;width:111px;height:27px"></div><div class="t" style="left:770.0px;width:111px;text-align:center;top:513.07px;font-size:13.5px;color:#000;font-weight:400;font-family:'Liberation Sans',sans-serif;">Dele<u>t</u>e</div><div class="a" style="left:252px;top:541px;width:464px;height:515px;box-shadow:1px 5px 2px 4px rgba(0,10,40,0.17), 0 4px 12px 12px rgba(10,30,90,0.08)"></div><div class="a" style="left:252px;top:541px;width:464px;height:515px;background:#fbfbfb;border:1px solid #3b6ea6;border-right-color:#6a88a8;border-bottom-color:#6a88a8"></div><div class="t" style="left:256px;top:547.84px;font-size:12px;color:#000;font-weight:400;font-family:'Liberation Sans',sans-serif;letter-spacing:-0.3px">Add Study</div><svg class="a" style="left:690px;top:544px" width="20" height="20"><path d="M5 5l10 10 M15 5l-10 10" stroke="#000" stroke-width="1.1"/></svg><div class="t" style="left:267.5px;top:582.57px;font-size:13.5px;color:#000;font-weight:400;font-family:'Liberation Sans',sans-serif;letter-spacing:-0.08px">Studies:</div><div class="a" style="left:268px;top:602px;width:432px;height:366px;background:#fbfbfb;border-top:2px solid #6e6e6e;border-left:2px solid #6e6e6e;border-right:1px solid #e3e3e3;border-bottom:1px solid #e3e3e3"></div><div class="a" style="left:288px;top:603px;width:411px;height:18px;background:#3a6ea5"></div><div class="a" style="left:270px;top:603px;width:429px;height:346px;overflow:hidden"><div class="t" style="left:20.5px;top:3.37px;font-size:13.5px;color:#fff;font-weight:400;font-family:'Liberation Sans',sans-serif;letter-spacing:-0.1px">Sierra Chart Custom Studies and Examples (SierraChartStudies.dll v1620)</div><div class="t" style="left:20.5px;top:21.37px;font-size:13.5px;color:#000;font-weight:400;font-family:'Liberation Sans',sans-serif;letter-spacing:-0.1px">koe (koe.dll v1620)</div><div class="t" style="left:39.5px;top:39.37px;font-size:13.5px;color:#000;font-weight:400;font-family:'Liberation Sans',sans-serif;letter-spacing:-0.1px">Position Data</div><div class="t" style="left:39.5px;top:57.37px;font-size:13.5px;color:#000;font-weight:400;font-family:'Liberation Sans',sans-serif;letter-spacing:-0.1px">scsf_PosInfo()</div></div><svg class="a" style="left:268px;top:600px" width="60" height="80"><g fill="none" stroke="#a0a0a0" stroke-width="1"><rect x="6.5" y="7.5" width="9" height="9" stroke="#7a7a7a"/><rect x="6.5" y="26.5" width="9" height="9" stroke="#7a7a7a"/></g>
<path d="M8.5 12h5 M11 9.5v5 M8.5 31h5" stroke="#000" stroke-width="1.3"/>
<g stroke="#808080" stroke-width="1" stroke-dasharray="1 1"><path d="M10.5 17v9"/><path d="M16 11.5h4 M16 30.5h4"/><path d="M29.5 38v28"/><path d="M30 47.5h8 M30 65.5h8"/></g></svg><div class="a" style="left:270px;top:950px;width:430px;height:16px;background:#fbfbfb"></div><div class="a" style="left:286px;top:951px;width:373px;height:14px;background:#cdcdcd"></div><svg class="a" style="left:270px;top:950px" width="430" height="16"><path d="M9 4.5 L5.5 8 L9 11.5" fill="none" stroke="#505050" stroke-width="1.6"/><path d="M419.5 4.5 L423 8 L419.5 11.5" fill="none" stroke="#505050" stroke-width="1.6"/></svg><div class="btn" style="left:267px;top:978px;width:434px;height:27px"></div><div class="t" style="left:267.0px;width:434px;text-align:center;top:984.07px;font-size:13.5px;color:#000;font-weight:400;font-family:'Liberation Sans',sans-serif;">Display Study Documentation</div><div class="a" style="left:313px;top:1016px;width:12px;height:12px;border-top:2px solid #6e6e6e;border-left:2px solid #6e6e6e;border-right:1px solid #e3e3e3;border-bottom:1px solid #e3e3e3;background:#fbfbfb"></div><div class="t" style="left:331px;top:1016.07px;font-size:13.5px;color:#000;font-weight:400;font-family:'Liberation Sans',sans-serif;letter-spacing:-0.1px">Show Settings</div><div class="a" style="left:437px;top:1013px;width:104px;height:28px;border:1px solid #646464;background:#fbfbfb"></div><div class="btn" style="left:438px;top:1014px;width:102px;height:26px"></div><div class="t" style="left:437.0px;width:104px;text-align:center;top:1019.57px;font-size:13.5px;color:#a0a0a0;font-weight:400;font-family:'Liberation Sans',sans-serif;">Add</div><div class="btn" style="left:547px;top:1014px;width:104px;height:27px"></div><div class="t" style="left:547.0px;width:104px;text-align:center;top:1019.57px;font-size:13.5px;color:#000;font-weight:400;font-family:'Liberation Sans',sans-serif;">Cancel</div><div class="a" style="left:912px;top:15px;width:839px;height:1065px;box-shadow:2px 1px 3px 3px rgba(0,10,30,0.2)"></div><div class="a" style="left:912px;top:15px;width:839px;height:1065px;background:#fbfbfb;border:1px solid #8c8c8c;border-right:2px solid #6e6e6e;border-bottom:none"></div><svg class="a" style="left:920px;top:21px" width="18" height="19"><path d="M1.5 1.5h9l3 3v12.5h-12z" fill="#fff" stroke="#333" stroke-width="1"/><path d="M2.5 2.5 h1 M4.5 2.5h1 M6.5 2.5h1" stroke="#777"/><rect x="2" y="7" width="11" height="9.5" fill="#6ac43a"/><rect x="2" y="7" width="11" height="3" fill="#c8ec9a"/><path d="M8 15 L15.5 3.5" stroke="#f0a010" stroke-width="2.6"/><path d="M15 3 l1.5 -2" stroke="#900" stroke-width="2"/><path d="M7.8 15.6 l0.6 -1.8 1.2 0.8z" fill="#333"/></svg><div class="t" style="left:942.5px;top:25.64px;font-size:12px;color:#9b9b9b;font-weight:400;font-family:'Liberation Sans',sans-serif;letter-spacing:-0.08px">*C:\SierraChart\ACS_Source\koe.cpp - Notepad++</div><svg class="a" style="left:1620px;top:18px" width="125" height="22"><path d="M12 12.5h11" stroke="#808080"/><path d="M57.5 7.5h10v10h-10z" fill="none" stroke="#808080"/><path d="M103 7l11 11 M114 7l-11 11" stroke="#808080"/></svg><div class="t" style="left:920.5px;top:50.14px;font-size:12px;color:#6a6a6a;font-weight:400;font-family:'Liberation Sans',sans-serif;letter-spacing:-0.15px">File</div><div class="t" style="left:952px;top:50.14px;font-size:12px;color:#6a6a6a;font-weight:400;font-family:'Liberation Sans',sans-serif;letter-spacing:-0.15px">Edit</div><div class="t" style="left:986px;top:50.14px;font-size:12px;color:#6a6a6a;font-weight:400;font-family:'Liberation Sans',sans-serif;letter-spacing:-0.15px">Search</div><div class="t" style="left:1035px;top:50.14px;font-size:12px;color:#6a6a6a;font-weight:400;font-family:'Liberation Sans',sans-serif;letter-spacing:-0.15px">View</div><div class="t" style="left:1074px;top:50.14px;font-size:12px;color:#6a6a6a;font-weight:400;font-family:'Liberation Sans',sans-serif;letter-spacing:-0.15px">Encoding</div><div class="t" style="left:1138px;top:50.14px;font-size:12px;color:#6a6a6a;font-weight:400;font-family:'Liberation Sans',sans-serif;letter-spacing:-0.15px">Language</div><div class="t" style="left:1204px;top:50.14px;font-size:12px;color:#6a6a6a;font-weight:400;font-family:'Liberation Sans',sans-serif;letter-spacing:-0.15px">Settings</div><div class="t" style="left:1260px;top:50.14px;font-size:12px;color:#6a6a6a;font-weight:400;font-family:'Liberation Sans',sans-serif;letter-spacing:-0.15px">Macro</div><div class="t" style="left:1308px;top:50.14px;font-size:12px;color:#6a6a6a;font-weight:400;font-family:'Liberation Sans',sans-serif;letter-spacing:-0.15px">Run</div><div class="t" style="left:1343px;top:50.14px;font-size:12px;color:#6a6a6a;font-weight:400;font-family:'Liberation Sans',sans-serif;letter-spacing:-0.15px">Window</div><div class="t" style="left:1401px;top:50.14px;font-size:12px;color:#6a6a6a;font-weight:400;font-family:'Liberation Sans',sans-serif;letter-spacing:-0.15px">?</div><div class="t" style="left:1736.5px;top:50.14px;font-size:12px;color:#6a6a6a;font-weight:400;font-family:'Liberation Sans',sans-serif;">X</div><svg class="a" style="left:0;top:0" width="1920" height="100"><path d="M919.5 69.5h8l4 4v11h-12z" fill="#fbfbfb" stroke="#bcbcbc"/><circle cx="930.5" cy="81.5" r="3.6" fill="#3c9a30"/><path d="M928.3 81.5h4.4 M930.5 79.3v4.4" stroke="#fff" stroke-width="1.4"/><path d="M947.5 69.5h6l3 3v8h-9z" fill="#dbe6f6" stroke="#6a95d0"/><path d="M941.5 74.5h5l1 1.5h7.5v8.5h-13.5z" fill="#f7d26a" stroke="#e29a2a"/><rect x="964.5" y="69.5" width="15" height="15" fill="#6d9be0" stroke="#3d6ec0"/><rect x="967" y="70" width="10" height="5" fill="#f4f7fc"/><rect x="967.5" y="78.5" width="9" height="5" fill="#e4ecd8"/><path d="M968 80.5h8" stroke="#60b040"/><rect x="987.5" y="70.5" width="10" height="10" fill="#6d9be0" stroke="#3d6ec0"/><rect x="989.5" y="72.5" width="10" height="10" fill="#6d9be0" stroke="#3d6ec0"/><rect x="991.5" y="74.5" width="10" height="10" fill="#6d9be0" stroke="#3d6ec0"/><rect x="993" y="80" width="6" height="4" fill="#d8ecc8"/><path d="M1011.5 69.5h8l3 3v12h-11z" fill="#fbfbfb" stroke="#bcbcbc"/><path d="M1013 73.5h6 M1013 75.5h7 M1013 77.5h6 M1013 79.5h5" stroke="#999"/><circle cx="1022" cy="81.5" r="3.6" fill="#e8600a"/><path d="M1019.8 81.5h4.4" stroke="#fff" stroke-width="1.4"/><path d="M1033.5 69.5h7l2 2v10h-9z M1036.5 71.5h7l2 2v10h-9z M1039.5 73.5h6l3 3v8h-9z" fill="#fbfbfb" stroke="#bcbcbc"/><circle cx="1045" cy="81.5" r="3.6" fill="#e8600a"/><path d="M1042.8 81.5h4.4" stroke="#fff" stroke-width="1.4"/><path d="M1060.5 69.5h6l2 2v5h-8z" fill="#e0eaf8" stroke="#5a8ad0"/><path d="M1056.5 76.5h15v6h-15z" fill="#b8b8b8" stroke="#606060"/><rect x="1058.5" y="82" width="10" height="2.5" fill="#fbfbfb" stroke="#5a8ad0"/><path d="M1078.5 68v16" stroke="#707070"/><path d="M1155.5 68v16" stroke="#707070"/><path d="M1209.5 68v16" stroke="#707070"/><path d="M1263.5 68v16" stroke="#707070"/><path d="M1317.5 68v16" stroke="#707070"/><path d="M1371.5 68v16" stroke="#707070"/><path d="M1563.5 68v16" stroke="#707070"/><path d="M1096.5 69.5v6 M1101 69.5 l-4 8" stroke="#999" stroke-width="1.8"/><circle cx="1092" cy="81" r="2.5" fill="none" stroke="#999" stroke-width="1.6"/><circle cx="1098" cy="82" r="2.5" fill="none" stroke="#999" stroke-width="1.6"/><path d="M1110.5 69.5h7l2 2v8h-9z" fill="#fbfbfb" stroke="#aaa"/><path d="M1115.5 73.5h7l3 3v8h-10z" fill="#d0d0d0" stroke="#aaa"/><rect x="1133" y="69" width="10" height="13" fill="#aaa"/><path d="M1137.5 74.5h6l2 2v8h-8z" fill="#d8d8d8" stroke="#999"/><path d="M1167 73.5h8a4 4 0 0 1 0 8h-6" fill="none" stroke="#4aa040" stroke-width="2.4"/><path d="M1166 81.5l4 -3.5v7z" fill="#4aa040"/><path d="M1202 73.5h-8a4 4 0 0 0 0 8h2" fill="none" stroke="#999" stroke-width="2.6"/><path d="M1203 73.5l-4 -3.5v7z" fill="#999"/><rect x="1219" y="73" width="5" height="11" fill="#2a2a2a"/><rect x="1226" y="73" width="5" height="11" fill="#2a2a2a"/><rect x="1220" y="70" width="3" height="4" fill="#555"/><rect x="1227" y="70" width="3" height="4" fill="#555"/><rect x="1223" y="75" width="4" height="3" fill="#444"/><rect x="1220" y="79" width="3" height="4" fill="#8a8"/><rect x="1227" y="79" width="3" height="4" fill="#8a8"/><text x="1241" y="77" font-family="Liberation Serif" font-style="italic" font-weight="bold" font-size="10" fill="#3a7ad8">b</text><text x="1247" y="85" font-family="Liberation Serif" font-style="italic" font-weight="bold" font-size="11" fill="#3a7ad8">a</text><path d="M1245 77l4 3" stroke="#4aa040" stroke-width="1.4"/><circle cx="1278" cy="75" r="4.5" fill="#dde8f4" stroke="#9ab8de" stroke-width="1.2"/><path d="M1281 78l4 5" stroke="#c08040" stroke-width="2"/><path d="M1280.5 75.5h6 M1283.5 72.5v6" stroke="#3a9a30" stroke-width="2"/><circle cx="1301" cy="75" r="4.5" fill="#dde8f4" stroke="#9ab8de" stroke-width="1.2"/><path d="M1304 78l4 5" stroke="#c08040" stroke-width="2"/><path d="M1303 75.5h6" stroke="#e02020" stroke-width="2"/><rect x="1326.5" y="69.5" width="14" height="12" fill="#f4f7fc" stroke="#5a8ad0"/><path d="M1327 72.5h13" stroke="#5a8ad0" stroke-width="2"/><rect x="1333" y="77" width="8" height="7" fill="#e8b030"/><path d="M1334.5 77v-2a2.5 2.5 0 0 1 5 0v2" fill="none" stroke="#999" stroke-width="1.2"/><rect x="1349.5" y="69.5" width="14" height="12" fill="#f4f7fc" stroke="#5a8ad0"/><path d="M1350 72.5h13" stroke="#5a8ad0" stroke-width="2"/><rect x="1356" y="77" width="8" height="7" fill="#e8b030"/><path d="M1357.5 77v-2a2.5 2.5 0 0 1 5 0v2" fill="none" stroke="#999" stroke-width="1.2"/><path d="M1380 71.5h8 M1380 74.5h11 M1380 80.5h10" stroke="#333" stroke-width="1.2"/><path d="M1380 77.5h13a2.5 2.5 0 0 1 0 5h-3" fill="none" stroke="#4a7ed8" stroke-width="1.4"/><path d="M1389 82.5l2.5 -2.5v5z" fill="#4a7ed8"/><text x="1404" y="83" font-family="Liberation Sans" font-weight="bold" font-size="17" fill="#5a8ad8">&#182;</text><rect x="1423.5" y="67.5" width="22" height="19" fill="#d4e6fa" stroke="#9cc8f0"/><path d="M1430 71.5h10 M1432 74.5h8 M1432 77.5h10 M1432 80.5h8 M1430 83.5h6" stroke="#1a1ae0" stroke-width="1.3"/><path d="M1428.5 70v15" stroke="#e02020" stroke-dasharray="1 1"/><rect x="1449.5" y="69.5" width="15" height="14" fill="#f6f0d8" stroke="#5a8ad0"/><path d="M1450 72.5h14" stroke="#5a8ad0" stroke-width="2"/><path d="M1459 74l-4 5h3l-2 4 5 -6h-3z" fill="#e8b020"/><rect x="1472.5" y="69.5" width="15" height="15" fill="#d8d890" stroke="#505050"/><rect x="1474" y="78" width="6" height="5" fill="#90c070"/><rect x="1481" y="71" width="5" height="6" fill="#90b8e0"/><path d="M1474 72l5 4 3 6 M1481 70l-3 7" stroke="#d03030" stroke-width="1.2"/><path d="M1474 80l4 -2" stroke="#50a040" stroke-width="2"/><path d="M1496.5 69.5h9l3 3v12h-12z" fill="#fbfbfb" stroke="#aaa" stroke-dasharray="2 1"/><path d="M1496 83l3 -8 M1497 77h5 M1499 75 q1 -4 5 -4" fill="none" stroke="#d03040" stroke-width="1.8"/><path d="M1518.5 73.5h5l1 1.5h8.5v9h-14.5z" fill="#f0c8c0" stroke="#d88070"/><path d="M1519 77.5h14" stroke="#d88070"/><path d="M1541 77 q8 -8 16 0 q-8 8 -16 0z" fill="#f4ede0" stroke="#c8a070"/><circle cx="1549" cy="77" r="3.2" fill="#5a8ad8"/><circle cx="1549" cy="77" r="1.2" fill="#223"/><rect x="1573.5" y="69.5" width="13" height="14" fill="#fbfbfb" stroke="#444"/><circle cx="1580" cy="76.5" r="3.3" fill="#d00000"/><rect x="1596.5" y="69.5" width="13" height="14" fill="#fbfbfb" stroke="#999"/><rect x="1600" y="73" width="6" height="7" fill="#999"/><rect x="1619.5" y="69.5" width="13" height="14" fill="#fbfbfb" stroke="#999"/><path d="M1623.5 72v9.5l5.5 -4.75z" fill="#9a9a9a"/><rect x="1642.5" y="69.5" width="13" height="14" fill="#fbfbfb" stroke="#4a70a0"/><path d="M1645 72v9l4 -4.5z M1649 72v9l4.5 -4.5z" fill="#3a7ae0"/><rect x="1665" y="69" width="12" height="13" fill="#888"/><rect x="1669" y="74" width="10" height="10" fill="#aaa" stroke="#777"/><path d="M1667 71.5h8 M1667 74h2" stroke="#ddd"/></svg><div class="a" style="left:913px;top:90px;width:837px;height:1px;background:#d8d8d8"></div><div class="a" style="left:915px;top:93px;width:81px;height:24px;background:#fbfbfb;border-right:2px solid #707070"></div><div class="a" style="left:915px;top:93px;width:79px;height:4px;background:#f9a634"></div><svg class="a" style="left:918px;top:98px" width="16" height="16"><rect x="1" y="1" width="13" height="13" fill="#ee3434"/><rect x="3" y="2" width="9" height="3.5" fill="#f6e4e4"/><rect x="3" y="9" width="9" height="4" fill="#f2c4c4"/><path d="M3 7.5h9" stroke="#f07070"/></svg><div class="t" style="left:934.5px;top:100.47px;font-size:12.2px;color:#000;font-weight:400;font-family:'Liberation Sans',sans-serif;letter-spacing:-0.45px">koe.cpp</div><svg class="a" style="left:976px;top:98px" width="16" height="16"><rect x="2" y="2" width="11" height="11" fill="#9c6c8c"/><path d="M4.5 4.5l6 6 M10.5 4.5l-6 6" stroke="#fff" stroke-width="2"/></svg><div class="a" style="left:915px;top:117px;width:836px;height:2px;background:#6e6e6e"></div><div class="a" style="left:915px;top:117px;width:2px;height:947px;background:#6e6e6e"></div><div class="a" style="left:1747px;top:119px;width:1px;height:925px;background:#e0e0e0"></div><div class="a" style="left:917px;top:119px;width:45px;height:925px;background:#e4e4e4"></div><div class="a" style="left:962px;top:119px;width:14px;height:925px;background-color:#fbfbfb;background-image:linear-gradient(45deg,#e6e8f0 25%,transparent 25%,transparent 75%,#e6e8f0 75%),linear-gradient(45deg,#e6e8f0 25%,transparent 25%,transparent 75%,#e6e8f0 75%);background-size:2px 2px;background-position:0 0,1px 1px"></div><div class="a" style="left:977px;top:427px;width:769px;height:14px;background:#e8ebf4"></div><div class="a" style="left:0;top:0;width:1746px;height:1044px;overflow:hidden"><div class="t" style="left:917px;width:26px;text-align:right;top:121.5px;font-size:11.67px;color:#8a8a8a;font-family:'Liberation Mono',monospace">1</div><div class="t" style="left:917px;width:26px;text-align:right;top:135.5px;font-size:11.67px;color:#8a8a8a;font-family:'Liberation Mono',monospace">2</div><div class="t code" style="left:977px;top:135.5px"><span style="color:#804000">#define FREEDLL     1</span></div><div class="t" style="left:917px;width:26px;text-align:right;top:149.5px;font-size:11.67px;color:#8a8a8a;font-family:'Liberation Mono',monospace">3</div><div class="t" style="left:917px;width:26px;text-align:right;top:163.5px;font-size:11.67px;color:#8a8a8a;font-family:'Liberation Mono',monospace">4</div><div class="t code" style="left:977px;top:163.5px"><span style="color:#804000">#include "sierrachart.h"</span></div><div class="t" style="left:917px;width:26px;text-align:right;top:177.5px;font-size:11.67px;color:#8a8a8a;font-family:'Liberation Mono',monospace">5</div><div class="t" style="left:917px;width:26px;text-align:right;top:191.5px;font-size:11.67px;color:#8a8a8a;font-family:'Liberation Mono',monospace">6</div><div class="t code" style="left:977px;top:191.5px"><span style="color:#804000">#include &lt;fstream&gt;</span></div><div class="t" style="left:917px;width:26px;text-align:right;top:205.5px;font-size:11.67px;color:#8a8a8a;font-family:'Liberation Mono',monospace">7</div><div class="t code" style="left:977px;top:205.5px"><span style="color:#804000">#include &lt;sstream&gt;</span></div><div class="t" style="left:917px;width:26px;text-align:right;top:219.5px;font-size:11.67px;color:#8a8a8a;font-family:'Liberation Mono',monospace">8</div><div class="t code" style="left:977px;top:219.5px"><span style="color:#804000">#include &lt;string&gt;</span></div><div class="t" style="left:917px;width:26px;text-align:right;top:233.5px;font-size:11.67px;color:#8a8a8a;font-family:'Liberation Mono',monospace">9</div><div class="t code" style="left:977px;top:233.5px"><span style="color:#804000">#include &lt;iostream&gt;</span></div><div class="t" style="left:917px;width:26px;text-align:right;top:247.5px;font-size:11.67px;color:#8a8a8a;font-family:'Liberation Mono',monospace">10</div><div class="t code" style="left:977px;top:247.5px"><span style="color:#804000">#include &lt;time.h&gt;</span></div><div class="t" style="left:917px;width:26px;text-align:right;top:261.5px;font-size:11.67px;color:#8a8a8a;font-family:'Liberation Mono',monospace">11</div><div class="t code" style="left:977px;top:261.5px"><span style="color:#000000">SCDLLName</span><span style="color:#000080">(</span><span style="color:#808080">"koe"</span><span style="color:#000080">)</span></div><div class="t" style="left:917px;width:26px;text-align:right;top:275.5px;font-size:11.67px;color:#8a8a8a;font-family:'Liberation Mono',monospace">12</div><div class="t code" style="left:977px;top:275.5px"><span style="color:#008000">//==========================================================================</span></div><div class="t" style="left:917px;width:26px;text-align:right;top:289.5px;font-size:11.67px;color:#8a8a8a;font-family:'Liberation Mono',monospace">13</div><div class="t code" style="left:977px;top:289.5px"><span style="color:#000000">SCSFExport</span><span style="color:#000000"> </span><span style="color:#000000">scsf_PositionData</span><span style="color:#000080">(</span><span style="color:#000000">SCStudyInterfaceRef</span><span style="color:#000000"> </span><span style="color:#000000">sc</span><span style="color:#000080">)</span></div><div class="t" style="left:917px;width:26px;text-align:right;top:303.5px;font-size:11.67px;color:#8a8a8a;font-family:'Liberation Mono',monospace">14</div><div class="t code" style="left:977px;top:303.5px"><span style="color:#008000">//==========================================================================</span></div><div class="t" style="left:917px;width:26px;text-align:right;top:317.5px;font-size:11.67px;color:#8a8a8a;font-family:'Liberation Mono',monospace">15</div><div class="t code" style="left:977px;top:317.5px"><span style="color:#000080">{</span></div><div class="t" style="left:917px;width:26px;text-align:right;top:331.5px;font-size:11.67px;color:#8a8a8a;font-family:'Liberation Mono',monospace">16</div><div class="t code" style="left:977px;top:331.5px"><span style="color:#000000"> </span><span style="color:#000000"> </span><span style="color:#000000"> </span><span style="color:#000000"> </span><span style="color:#008000">// Graph variables</span></div><div class="t" style="left:917px;width:26px;text-align:right;top:345.5px;font-size:11.67px;color:#8a8a8a;font-family:'Liberation Mono',monospace">17</div><div class="t code" style="left:977px;top:345.5px"><span style="color:#000000"> </span><span style="color:#000000"> </span><span style="color:#000000"> </span><span style="color:#000000"> </span><span style="color:#000000">SCSubgraphRef</span><span style="color:#000000"> </span><span style="color:#000000">MaxLossLevelSG</span><span style="color:#000000"> </span><span style="color:#000080">=</span><span style="color:#000000"> </span><span style="color:#000000">sc</span><span style="color:#000080">.</span><span style="color:#000000">Subgraph</span><span style="color:#000080">[</span><span style="color:#ff8000">0</span><span style="color:#000080">]</span><span style="color:#000080">;</span></div><div class="t" style="left:917px;width:26px;text-align:right;top:359.5px;font-size:11.67px;color:#8a8a8a;font-family:'Liberation Mono',monospace">18</div><div class="t" style="left:917px;width:26px;text-align:right;top:373.5px;font-size:11.67px;color:#8a8a8a;font-family:'Liberation Mono',monospace">19</div><div class="t code" style="left:977px;top:373.5px"><span style="color:#000000"> </span><span style="color:#000000"> </span><span style="color:#000000"> </span><span style="color:#000000"> </span><span style="color:#008000">// Persistent variables</span></div><div class="t" style="left:917px;width:26px;text-align:right;top:387.5px;font-size:11.67px;color:#8a8a8a;font-family:'Liberation Mono',monospace">20</div><div class="t code" style="left:977px;top:387.5px"><span style="color:#000000"> </span><span style="color:#000000"> </span><span style="color:#000000"> </span><span style="color:#000000"> </span><span style="color:#8000ff">float</span><span style="color:#000080">&amp;</span><span style="color:#000000"> </span><span style="color:#000000">MaxLossLevel</span><span style="color:#000000"> </span><span style="color:#000080">=</span><span style="color:#000000"> </span><span style="color:#000000">sc</span><span style="color:#000080">.</span><span style="color:#000000">GetPersistentFloat</span><span style="color:#000080">(</span><span style="color:#ff8000">0</span><span style="color:#000080">)</span><span style="color:#000080">;</span></div><div class="t" style="left:917px;width:26px;text-align:right;top:401.5px;font-size:11.67px;color:#8a8a8a;font-family:'Liberation Mono',monospace">21</div><div class="t" style="left:917px;width:26px;text-align:right;top:415.5px;font-size:11.67px;color:#8a8a8a;font-family:'Liberation Mono',monospace">22</div><div class="t code" style="left:977px;top:415.5px"><span style="color:#000000"> </span><span style="color:#000000"> </span><span style="color:#000000"> </span><span style="color:#000000"> </span><span style="color:#008000">// Input variables</span></div><div class="t" style="left:917px;width:26px;text-align:right;top:429.5px;font-size:11.67px;color:#8a8a8a;font-family:'Liberation Mono',monospace">23</div><div class="t code" style="left:977px;top:429.5px"><span style="color:#000000"> </span><span style="color:#000000"> </span><span style="color:#000000"> </span><span style="color:#000000"> </span><span style="color:#000000">SCInputRef</span><span style="color:#000000"> </span><span style="color:#000000">MaxLossPoints</span><span style="color:#000000"> </span><span style="color:#000080">=</span><span style="color:#000000"> </span><span style="color:#000000">sc</span><span style="color:#000080">.</span><span style="color:#000000">Input</span><span style="color:#000080">[</span><span style="color:#ff8000">0</span><span style="color:#000080">]</span><span style="color:#000080">;</span></div><div class="t" style="left:917px;width:26px;text-align:right;top:443.5px;font-size:11.67px;color:#8a8a8a;font-family:'Liberation Mono',monospace">24</div><div class="t" style="left:917px;width:26px;text-align:right;top:457.5px;font-size:11.67px;color:#8a8a8a;font-family:'Liberation Mono',monospace">25</div><div class="t code" style="left:977px;top:457.5px"><span style="color:#000000"> </span><span style="color:#000000"> </span><span style="color:#000000"> </span><span style="color:#000000"> </span><span style="color:#008000">// Initialization</span></div><div class="t" style="left:917px;width:26px;text-align:right;top:471.5px;font-size:11.67px;color:#8a8a8a;font-family:'Liberation Mono',monospace">26</div><div class="t code" style="left:977px;top:471.5px"><span style="color:#000000"> </span><span style="color:#000000"> </span><span style="color:#000000"> </span><span style="color:#000000"> </span><span style="color:#0000ff">if</span><span style="color:#000000"> </span><span style="color:#000080">(</span><span style="color:#000000">sc</span><span style="color:#000080">.</span><span style="color:#000000">SetDefaults</span><span style="color:#000080">)</span></div><div class="t" style="left:917px;width:26px;text-align:right;top:485.5px;font-size:11.67px;color:#8a8a8a;font-family:'Liberation Mono',monospace">27</div><div class="t code" style="left:977px;top:485.5px"><span style="color:#000000"> </span><span style="color:#000000"> </span><span style="color:#000000"> </span><span style="color:#000000"> </span><span style="color:#000080">{</span></div><div class="t" style="left:917px;width:26px;text-align:right;top:499.5px;font-size:11.67px;color:#8a8a8a;font-family:'Liberation Mono',monospace">28</div><div class="t code" style="left:977px;top:499.5px"><span style="color:#000000"> </span><span style="color:#000000"> </span><span style="color:#000000"> </span><span style="color:#000000"> </span><span style="color:#000000"> </span><span style="color:#000000"> </span><span style="color:#000000"> </span><span style="color:#000000"> </span><span style="color:#000000">sc</span><span style="color:#000080">.</span><span style="color:#000000">GraphName</span><span style="color:#000000"> </span><span style="color:#000080">=</span><span style="color:#000000"> </span><span style="color:#808080">"Position Data"</span><span style="color:#000080">;</span></div><div class="t" style="left:917px;width:26px;text-align:right;top:513.5px;font-size:11.67px;color:#8a8a8a;font-family:'Liberation Mono',monospace">29</div><div class="t code" style="left:977px;top:513.5px"><span style="color:#000000"> </span><span style="color:#000000"> </span><span style="color:#000000"> </span><span style="color:#000000"> </span><span style="color:#000000"> </span><span style="color:#000000"> </span><span style="color:#000000"> </span><span style="color:#000000"> </span><span style="color:#000000">sc</span><span style="color:#000080">.</span><span style="color:#000000">StudyDescription</span><span style="color:#000000"> </span><span style="color:#000080">=</span><span style="color:#000000"> </span><span style="color:#808080">"Show data from the open positions"</span><span style="color:#000080">;</span></div><div class="t" style="left:917px;width:26px;text-align:right;top:527.5px;font-size:11.67px;color:#8a8a8a;font-family:'Liberation Mono',monospace">30</div><div class="t code" style="left:977px;top:527.5px"><span style="color:#000000"> </span><span style="color:#000000"> </span><span style="color:#000000"> </span><span style="color:#000000"> </span><span style="color:#000000"> </span><span style="color:#000000"> </span><span style="color:#000000"> </span><span style="color:#000000"> </span><span style="color:#000000">sc</span><span style="color:#000080">.</span><span style="color:#000000">GraphDrawType</span><span style="color:#000000"> </span><span style="color:#000080">=</span><span style="color:#000000"> </span><span style="color:#000000">GDT_CUSTOM</span><span style="color:#000080">;</span></div><div class="t" style="left:917px;width:26px;text-align:right;top:541.5px;font-size:11.67px;color:#8a8a8a;font-family:'Liberation Mono',monospace">31</div><div class="t code" style="left:977px;top:541.5px"><span style="color:#000000"> </span><span style="color:#000000"> </span><span style="color:#000000"> </span><span style="color:#000000"> </span><span style="color:#000000"> </span><span style="color:#000000"> </span><span style="color:#000000"> </span><span style="color:#000000"> </span><span style="color:#000000">sc</span><span style="color:#000080">.</span><span style="color:#000000">GraphRegion</span><span style="color:#000000"> </span><span style="color:#000080">=</span><span style="color:#000000"> </span><span style="color:#ff8000">0</span><span style="color:#000080">;</span></div><div class="t" style="left:917px;width:26px;text-align:right;top:555.5px;font-size:11.67px;color:#8a8a8a;font-family:'Liberation Mono',monospace">32</div><div class="t" style="left:917px;width:26px;text-align:right;top:569.5px;font-size:11.67px;color:#8a8a8a;font-family:'Liberation Mono',monospace">33</div><div class="t code" style="left:977px;top:569.5px"><span style="color:#000000"> </span><span style="color:#000000"> </span><span style="color:#000000"> </span><span style="color:#000000"> </span><span style="color:#000000"> </span><span style="color:#000000"> </span><span style="color:#000000"> </span><span style="color:#000000"> </span><span style="color:#000000">MaxLossLevelSG</span><span style="color:#000080">.</span><span style="color:#000000">Name</span><span style="color:#000000"> </span><span style="color:#000080">=</span><span style="color:#000000"> </span><span style="color:#808080">"MaxLossPoint"</span><span style="color:#000080">;</span></div><div class="t" style="left:917px;width:26px;text-align:right;top:583.5px;font-size:11.67px;color:#8a8a8a;font-family:'Liberation Mono',monospace">34</div><div class="t code" style="left:977px;top:583.5px"><span style="color:#000000"> </span><span style="color:#000000"> </span><span style="color:#000000"> </span><span style="color:#000000"> </span><span style="color:#000000"> </span><span style="color:#000000"> </span><span style="color:#000000"> </span><span style="color:#000000"> </span><span style="color:#000000">MaxLossLevelSG</span><span style="color:#000080">.</span><span style="color:#000000">DrawStyle</span><span style="color:#000000"> </span><span style="color:#000080">=</span><span style="color:#000000"> </span><span style="color:#000000">DRAWSTYLE_POINT</span><span style="color:#000080">;</span></div><div class="t" style="left:917px;width:26px;text-align:right;top:597.5px;font-size:11.67px;color:#8a8a8a;font-family:'Liberation Mono',monospace">35</div><div class="t code" style="left:977px;top:597.5px"><span style="color:#000000"> </span><span style="color:#000000"> </span><span style="color:#000000"> </span><span style="color:#000000"> </span><span style="color:#000000"> </span><span style="color:#000000"> </span><span style="color:#000000"> </span><span style="color:#000000"> </span><span style="color:#000000">MaxLossLevelSG</span><span style="color:#000080">.</span><span style="color:#000000">PrimaryColor</span><span style="color:#000000"> </span><span style="color:#000080">=</span><span style="color:#000000"> </span><span style="color:#000000">RGB</span><span style="color:#000080">(</span><span style="color:#ff8000">255</span><span style="color:#000080">,</span><span style="color:#000000"> </span><span style="color:#ff8000">255</span><span style="color:#000080">,</span><span style="color:#000000"> </span><span style="color:#ff8000">255</span><span style="color:#000080">)</span><span style="color:#000080">;</span></div><div class="t" style="left:917px;width:26px;text-align:right;top:611.5px;font-size:11.67px;color:#8a8a8a;font-family:'Liberation Mono',monospace">36</div><div class="t code" style="left:977px;top:611.5px"><span style="color:#000000"> </span><span style="color:#000000"> </span><span style="color:#000000"> </span><span style="color:#000000"> </span><span style="color:#000000"> </span><span style="color:#000000"> </span><span style="color:#000000"> </span><span style="color:#000000"> </span><span style="color:#000000">MaxLossLevelSG</span><span style="color:#000080">.</span><span style="color:#000000">DrawZeros</span><span style="color:#000000"> </span><span style="color:#000080">=</span><span style="color:#000000"> </span><span style="color:#0000ff">false</span><span style="color:#000080">;</span></div><div class="t" style="left:917px;width:26px;text-align:right;top:625.5px;font-size:11.67px;color:#8a8a8a;font-family:'Liberation Mono',monospace">37</div><div class="t code" style="left:977px;top:625.5px"><span style="color:#000000"> </span><span style="color:#000000"> </span><span style="color:#000000"> </span><span style="color:#000000"> </span><span style="color:#000000"> </span><span style="color:#000000"> </span><span style="color:#000000"> </span><span style="color:#000000"> </span><span style="color:#000000">MaxLossLevelSG</span><span style="color:#000080">.</span><span style="color:#000000">LineWidth</span><span style="color:#000000"> </span><span style="color:#000080">=</span><span style="color:#000000"> </span><span style="color:#ff8000">2</span><span style="color:#000080">;</span></div><div class="t" style="left:917px;width:26px;text-align:right;top:639.5px;font-size:11.67px;color:#8a8a8a;font-family:'Liberation Mono',monospace">38</div><div class="t" style="left:917px;width:26px;text-align:right;top:653.5px;font-size:11.67px;color:#8a8a8a;font-family:'Liberation Mono',monospace">39</div><div class="t code" style="left:977px;top:653.5px"><span style="color:#000000"> </span><span style="color:#000000"> </span><span style="color:#000000"> </span><span style="color:#000000"> </span><span style="color:#000000"> </span><span style="color:#000000"> </span><span style="color:#000000"> </span><span style="color:#000000"> </span><span style="color:#000000">MaxLossPoints</span><span style="color:#000080">.</span><span style="color:#000000">Name</span><span style="color:#000000"> </span><span style="color:#000080">=</span><span style="color:#000000"> </span><span style="color:#808080">"Max Loss Points/contract"</span><span style="color:#000080">;</span></div><div class="t" style="left:917px;width:26px;text-align:right;top:667.5px;font-size:11.67px;color:#8a8a8a;font-family:'Liberation Mono',monospace">40</div><div class="t code" style="left:977px;top:667.5px"><span style="color:#000000"> </span><span style="color:#000000"> </span><span style="color:#000000"> </span><span style="color:#000000"> </span><span style="color:#000000"> </span><span style="color:#000000"> </span><span style="color:#000000"> </span><span style="color:#000000"> </span><span style="color:#000000">MaxLossPoints</span><span style="color:#000080">.</span><span style="color:#000000">SetFloat</span><span style="color:#000080">(</span><span style="color:#ff8000">0.0f</span><span style="color:#000080">)</span><span style="color:#000080">;</span></div><div class="t" style="left:917px;width:26px;text-align:right;top:681.5px;font-size:11.67px;color:#8a8a8a;font-family:'Liberation Mono',monospace">41</div><div class="t" style="left:917px;width:26px;text-align:right;top:695.5px;font-size:11.67px;color:#8a8a8a;font-family:'Liberation Mono',monospace">42</div><div class="t code" style="left:977px;top:695.5px"><span style="color:#000000"> </span><span style="color:#000000"> </span><span style="color:#000000"> </span><span style="color:#000000"> </span><span style="color:#000000"> </span><span style="color:#000000"> </span><span style="color:#000000"> </span><span style="color:#000000"> </span><span style="color:#000000">MaxLossLevel</span><span style="color:#000000"> </span><span style="color:#000080">=</span><span style="color:#000000"> </span><span style="color:#ff8000">0.0f</span><span style="color:#000080">;</span></div><div class="t" style="left:917px;width:26px;text-align:right;top:709.5px;font-size:11.67px;color:#8a8a8a;font-family:'Liberation Mono',monospace">43</div><div class="t" style="left:917px;width:26px;text-align:right;top:723.5px;font-size:11.67px;color:#8a8a8a;font-family:'Liberation Mono',monospace">44</div><div class="t code" style="left:977px;top:723.5px"><span style="color:#000000"> </span><span style="color:#000000"> </span><span style="color:#000000"> </span><span style="color:#000000"> </span><span style="color:#000000"> </span><span style="color:#000000"> </span><span style="color:#000000"> </span><span style="color:#000000"> </span><span style="color:#000000">sc</span><span style="color:#000080">.</span><span style="color:#000000">AutoLoop</span><span style="color:#000000"> </span><span style="color:#000080">=</span><span style="color:#000000"> </span><span style="color:#ff8000">1</span><span style="color:#000080">;</span></div><div class="t" style="left:917px;width:26px;text-align:right;top:737.5px;font-size:11.67px;color:#8a8a8a;font-family:'Liberation Mono',monospace">45</div><div class="t code" style="left:977px;top:737.5px"><span style="color:#000000"> </span><span style="color:#000000"> </span><span style="color:#000000"> </span><span style="color:#000000"> </span><span style="color:#000000"> </span><span style="color:#000000"> </span><span style="color:#000000"> </span><span style="color:#000000"> </span><span style="color:#000000">sc</span><span style="color:#000080">.</span><span style="color:#000000">FreeDLL</span><span style="color:#000000"> </span><span style="color:#000080">=</span><span style="color:#000000"> </span><span style="color:#000000">FREEDLL</span><span style="color:#000080">;</span></div><div class="t" style="left:917px;width:26px;text-align:right;top:751.5px;font-size:11.67px;color:#8a8a8a;font-family:'Liberation Mono',monospace">46</div><div class="t" style="left:917px;width:26px;text-align:right;top:765.5px;font-size:11.67px;color:#8a8a8a;font-family:'Liberation Mono',monospace">47</div><div class="t code" style="left:977px;top:765.5px"><span style="color:#000000"> </span><span style="color:#000000"> </span><span style="color:#000000"> </span><span style="color:#000000"> </span><span style="color:#000000"> </span><span style="color:#000000"> </span><span style="color:#000000"> </span><span style="color:#000000"> </span><span style="color:#0000ff">return</span><span style="color:#000080">;</span></div><div class="t" style="left:917px;width:26px;text-align:right;top:779.5px;font-size:11.67px;color:#8a8a8a;font-family:'Liberation Mono',monospace">48</div><div class="t code" style="left:977px;top:779.5px"><span style="color:#000000"> </span><span style="color:#000000"> </span><span style="color:#000000"> </span><span style="color:#000000"> </span><span style="color:#000080">}</span></div><div class="t" style="left:917px;width:26px;text-align:right;top:793.5px;font-size:11.67px;color:#8a8a8a;font-family:'Liberation Mono',monospace">49</div><div class="t" style="left:917px;width:26px;text-align:right;top:807.5px;font-size:11.67px;color:#8a8a8a;font-family:'Liberation Mono',monospace">50</div><div class="t code" style="left:977px;top:807.5px"><span style="color:#000000"> </span><span style="color:#000000"> </span><span style="color:#000000"> </span><span style="color:#000000"> </span><span style="color:#0000ff">if</span><span style="color:#000080">(</span><span style="color:#000000">MaxLossPoints</span><span style="color:#000080">.</span><span style="color:#000000">GetFloat</span><span style="color:#000080">(</span><span style="color:#000080">)</span><span style="color:#000000"> </span><span style="color:#000080">=</span><span style="color:#000080">=</span><span style="color:#000000"> </span><span style="color:#ff8000">0.0f</span><span style="color:#000080">)</span><span style="color:#000000"> </span><span style="color:#0000ff">return</span><span style="color:#000080">;</span></div><div class="t" style="left:917px;width:26px;text-align:right;top:821.5px;font-size:11.67px;color:#8a8a8a;font-family:'Liberation Mono',monospace">51</div><div class="t" style="left:917px;width:26px;text-align:right;top:835.5px;font-size:11.67px;color:#8a8a8a;font-family:'Liberation Mono',monospace">52</div><div class="t code" style="left:977px;top:835.5px"><span style="color:#000000"> </span><span style="color:#000000"> </span><span style="color:#000000"> </span><span style="color:#000000"> </span><span style="color:#008000">// Handle the active (latest) bar only</span></div><div class="t" style="left:917px;width:26px;text-align:right;top:849.5px;font-size:11.67px;color:#8a8a8a;font-family:'Liberation Mono',monospace">53</div><div class="t code" style="left:977px;top:849.5px"><span style="color:#000000"> </span><span style="color:#000000"> </span><span style="color:#000000"> </span><span style="color:#000000"> </span><span style="color:#0000ff">if</span><span style="color:#000080">(</span><span style="color:#000000">sc</span><span style="color:#000080">.</span><span style="color:#000000">Index</span><span style="color:#000000"> </span><span style="color:#000080">=</span><span style="color:#000080">=</span><span style="color:#000000"> </span><span style="color:#000080">(</span><span style="color:#000000">sc</span><span style="color:#000080">.</span><span style="color:#000000">ArraySize</span><span style="color:#000000"> </span><span style="color:#000080">-</span><span style="color:#000000"> </span><span style="color:#ff8000">1</span><span style="color:#000080">)</span><span style="color:#000080">)</span><span style="color:#000000"> </span><span style="color:#000080">{</span></div><div class="t" style="left:917px;width:26px;text-align:right;top:863.5px;font-size:11.67px;color:#8a8a8a;font-family:'Liberation Mono',monospace">54</div><div class="t code" style="left:977px;top:863.5px"><span style="color:#000000"> </span><span style="color:#000000"> </span><span style="color:#000000"> </span><span style="color:#000000"> </span><span style="color:#000000"> </span><span style="color:#000000"> </span><span style="color:#000000"> </span><span style="color:#000000"> </span><span style="color:#000000">s_SCPositionData</span><span style="color:#000000"> </span><span style="color:#000000">PositionData</span><span style="color:#000080">;</span></div><div class="t" style="left:917px;width:26px;text-align:right;top:877.5px;font-size:11.67px;color:#8a8a8a;font-family:'Liberation Mono',monospace">55</div><div class="t code" style="left:977px;top:877.5px"><span style="color:#000000"> </span><span style="color:#000000"> </span><span style="color:#000000"> </span><span style="color:#000000"> </span><span style="color:#000000"> </span><span style="color:#000000"> </span><span style="color:#000000"> </span><span style="color:#000000"> </span><span style="color:#0000ff">if</span><span style="color:#000080">(</span><span style="color:#000000">sc</span><span style="color:#000080">.</span><span style="color:#000000">GetTradePosition</span><span style="color:#000080">(</span><span style="color:#000000">PositionData</span><span style="color:#000080">)</span><span style="color:#000000"> </span><span style="color:#000080">!</span><span style="color:#000080">=</span><span style="color:#000000"> </span><span style="color:#000000">SCTRADING_ORDER_ERROR</span><span style="color:#000080">)</span><span style="color:#000000"> </span><span style="color:#000080">{</span></div><div class="t" style="left:917px;width:26px;text-align:right;top:891.5px;font-size:11.67px;color:#8a8a8a;font-family:'Liberation Mono',monospace">56</div><div class="t code" style="left:977px;top:891.5px"><span style="color:#000000"> </span><span style="color:#000000"> </span><span style="color:#000000"> </span><span style="color:#000000"> </span><span style="color:#000000"> </span><span style="color:#000000"> </span><span style="color:#000000"> </span><span style="color:#000000"> </span><span style="color:#000000"> </span><span style="color:#000000"> </span><span style="color:#000000"> </span><span style="color:#000000"> </span><span style="color:#000000">MaxLossLevel</span><span style="color:#000000"> </span><span style="color:#000080">=</span><span style="color:#000000"> </span><span style="color:#000080">(</span><span style="color:#8000ff">float</span><span style="color:#000080">)</span><span style="color:#000000">PositionData</span><span style="color:#000080">.</span><span style="color:#000000">AveragePrice</span><span style="color:#000000"> </span><span style="color:#000080">-</span><span style="color:#000000"> </span><span style="color:#000080">(</span><span style="color:#000080">(</span><span style="color:#000000">PositionData</span><span style="color:#000080">.</span><span style="color:#000000">PositionQuantity</span><span style="color:#000000"> </span><span style="color:#000080">&gt;</span><span style="color:#000000"> </span><span style="color:#ff8000">0</span><span style="color:#000080">)</span><span style="color:#000000"> </span><span style="color:#000080">?</span><span style="color:#000000"> </span><span style="color:#000000">MaxLossPoints</span><span style="color:#000080">.</span><span style="color:#000000">GetFloat</span><span style="color:#000080">(</span><span style="color:#000080">)</span><span style="color:#000000"> </span><span style="color:#000080">:</span><span style="color:#000000"> </span><span style="color:#000080">-</span><span style="color:#000000">MaxLossPoints</span><span style="color:#000080">.</span><span style="color:#000000">GetFloat</span><span style="color:#000080">(</span><span style="color:#000080">)</span><span style="color:#000080">)</span><span style="color:#000080">;</span></div><div class="t" style="left:917px;width:26px;text-align:right;top:905.5px;font-size:11.67px;color:#8a8a8a;font-family:'Liberation Mono',monospace">57</div><div class="t code" style="left:977px;top:905.5px"><span style="color:#000000"> </span><span style="color:#000000"> </span><span style="color:#000000"> </span><span style="color:#000000"> </span><span style="color:#000000"> </span><span style="color:#000000"> </span><span style="color:#000000"> </span><span style="color:#000000"> </span><span style="color:#000080">}</span></div><div class="t" style="left:917px;width:26px;text-align:right;top:919.5px;font-size:11.67px;color:#8a8a8a;font-family:'Liberation Mono',monospace">58</div><div class="t code" style="left:977px;top:919.5px"><span style="color:#000000"> </span><span style="color:#000000"> </span><span style="color:#000000"> </span><span style="color:#000000"> </span><span style="color:#000000"> </span><span style="color:#000000"> </span><span style="color:#000000"> </span><span style="color:#000000"> </span><span style="color:#0000ff">else</span><span style="color:#000000"> </span><span style="color:#000080">{</span></div><div class="t" style="left:917px;width:26px;text-align:right;top:933.5px;font-size:11.67px;color:#8a8a8a;font-family:'Liberation Mono',monospace">59</div><div class="t code" style="left:977px;top:933.5px"><span style="color:#000000"> </span><span style="color:#000000"> </span><span style="color:#000000"> </span><span style="color:#000000"> </span><span style="color:#000000"> </span><span style="color:#000000"> </span><span style="color:#000000"> </span><span style="color:#000000"> </span><span style="color:#000000"> </span><span style="color:#000000"> </span><span style="color:#000000"> </span><span style="color:#000000"> </span><span style="color:#000000">sc</span><span style="color:#000080">.</span><span style="color:#000000">AddMessageToLog</span><span style="color:#000080">(</span><span style="color:#808080">"SCTRADING_ORDER_ERROR in scsf_PosInfo()"</span><span style="color:#000080">,</span><span style="color:#000000"> </span><span style="color:#ff8000">1</span><span style="color:#000080">)</span><span style="color:#000080">;</span></div><div class="t" style="left:917px;width:26px;text-align:right;top:947.5px;font-size:11.67px;color:#8a8a8a;font-family:'Liberation Mono',monospace">60</div><div class="t code" style="left:977px;top:947.5px"><span style="color:#000000"> </span><span style="color:#000000"> </span><span style="color:#000000"> </span><span style="color:#000000"> </span><span style="color:#000000"> </span><span style="color:#000000"> </span><span style="color:#000000"> </span><span style="color:#000000"> </span><span style="color:#000080">}</span></div><div class="t" style="left:917px;width:26px;text-align:right;top:961.5px;font-size:11.67px;color:#8a8a8a;font-family:'Liberation Mono',monospace">61</div><div class="t code" style="left:977px;top:961.5px"><span style="color:#000000"> </span><span style="color:#000000"> </span><span style="color:#000000"> </span><span style="color:#000000"> </span><span style="color:#000000"> </span><span style="color:#000000"> </span><span style="color:#000000"> </span><span style="color:#000000"> </span><span style="color:#000000">MaxLossLevelSG</span><span style="color:#000080">[</span><span style="color:#000000">sc</span><span style="color:#000080">.</span><span style="color:#000000">Index</span><span style="color:#000000"> </span><span style="color:#000080">-</span><span style="color:#000000"> </span><span style="color:#ff8000">1</span><span style="color:#000080">]</span><span style="color:#000000"> </span><span style="color:#000080">=</span><span style="color:#000000"> </span><span style="color:#ff8000">0.0f</span><span style="color:#000080">;</span></div><div class="t" style="left:917px;width:26px;text-align:right;top:975.5px;font-size:11.67px;color:#8a8a8a;font-family:'Liberation Mono',monospace">62</div><div class="t code" style="left:977px;top:975.5px"><span style="color:#000000"> </span><span style="color:#000000"> </span><span style="color:#000000"> </span><span style="color:#000000"> </span><span style="color:#000000"> </span><span style="color:#000000"> </span><span style="color:#000000"> </span><span style="color:#000000"> </span><span style="color:#000000">MaxLossLevelSG</span><span style="color:#000080">[</span><span style="color:#000000">sc</span><span style="color:#000080">.</span><span style="color:#000000">Index</span><span style="color:#000080">]</span><span style="color:#000000"> </span><span style="color:#000080">=</span><span style="color:#000000"> </span><span style="color:#000000">MaxLossLevel</span><span style="color:#000080">;</span></div><div class="t" style="left:917px;width:26px;text-align:right;top:989.5px;font-size:11.67px;color:#8a8a8a;font-family:'Liberation Mono',monospace">63</div><div class="t code" style="left:977px;top:989.5px"><span style="color:#000000"> </span><span style="color:#000000"> </span><span style="color:#000000"> </span><span style="color:#000000"> </span><span style="color:#000080">}</span></div><div class="t" style="left:917px;width:26px;text-align:right;top:1003.5px;font-size:11.67px;color:#8a8a8a;font-family:'Liberation Mono',monospace">64</div><div class="t code" style="left:977px;top:1003.5px"><span style="color:#000080">}</span></div><div class="t" style="left:917px;width:26px;text-align:right;top:1017.5px;font-size:11.67px;color:#8a8a8a;font-family:'Liberation Mono',monospace">65</div></div><svg class="a" style="left:0;top:0" width="1920" height="1080"><g stroke="#909090" stroke-dasharray="1 1"><path d="M1005.5 442V455"/><path d="M1005.5 498V777"/><path d="M1005.5 862V987"/><path d="M1033.5 890V903"/><path d="M1033.5 932V945"/></g><g fill="none" stroke="#ff0000" stroke-width="1"><path d="M969.5 327V1022.5H976"/></g><rect x="965.5" y="318.5" width="8" height="8" fill="#fbfbfb" stroke="#ff0000"/><path d="M965.5 318.5v8" stroke="#ff0000"/><path d="M967.5 322.5h4" stroke="#ff0000"/><rect x="965.5" y="486.5" width="8" height="8" fill="#fbfbfb" stroke="#808080"/><path d="M965.5 486.5v8" stroke="#ff0000"/><path d="M967.5 490.5h4" stroke="#808080"/><rect x="965.5" y="850.5" width="8" height="8" fill="#fbfbfb" stroke="#808080"/><path d="M965.5 850.5v8" stroke="#ff0000"/><path d="M967.5 854.5h4" stroke="#808080"/><rect x="965.5" y="878.5" width="8" height="8" fill="#fbfbfb" stroke="#808080"/><path d="M965.5 878.5v8" stroke="#ff0000"/><path d="M967.5 882.5h4" stroke="#808080"/><rect x="965.5" y="920.5" width="8" height="8" fill="#fbfbfb" stroke="#808080"/><path d="M965.5 920.5v8" stroke="#ff0000"/><path d="M967.5 924.5h4" stroke="#808080"/><path d="M970 784.5h4" stroke="#808080"/><path d="M970 910.5h4" stroke="#808080"/><path d="M970 952.5h4" stroke="#808080"/><path d="M970 994.5h4" stroke="#808080"/></svg><div class="a" style="left:917px;top:1044px;width:834px;height:19px;background:#fbfbfb"></div><div class="a" style="left:934px;top:1044px;width:492px;height:15px;background:#cdcdcd"></div><svg class="a" style="left:917px;top:1044px" width="834" height="16"><path d="M10 4 L6 7.5 L10 11" fill="none" stroke="#505050" stroke-width="1.6"/><path d="M819 4 L823 7.5 L819 11" fill="none" stroke="#505050" stroke-width="1.6"/></svg><div class="a" style="left:913px;top:1062px;width:838px;height:2px;background:#a8a8a8;border-top:1px solid #6a6a6a"></div><div class="a" style="left:1010px;top:1066px;width:1px;height:14px;background:#d4d4d4"></div><div class="a" style="left:1210px;top:1066px;width:1px;height:14px;background:#d4d4d4"></div><div class="a" style="left:1470px;top:1066px;width:1px;height:14px;background:#d4d4d4"></div><div class="a" style="left:1580px;top:1066px;width:1px;height:14px;background:#d4d4d4"></div><div class="a" style="left:1700px;top:1066px;width:1px;height:14px;background:#d4d4d4"></div><div class="a" style="left:1731px;top:1066px;width:1px;height:14px;background:#d4d4d4"></div><div class="t" style="left:916px;top:1071.42px;font-size:12.5px;color:#000;font-weight:400;font-family:'Liberation Sans',sans-serif;letter-spacing:-0.2px">C++ source file</div><div class="t" style="left:1015px;top:1071.42px;font-size:12.5px;color:#000;font-weight:400;font-family:'Liberation Sans',sans-serif;letter-spacing:-0.2px">length : 1,761    lines : 65</div><div class="t" style="left:1214px;top:1071.42px;font-size:12.5px;color:#000;font-weight:400;font-family:'Liberation Sans',sans-serif;letter-spacing:-0.2px">Ln : 23    Col : 44    Sel : 0 | 0</div><div class="t" style="left:1474px;top:1071.42px;font-size:12.5px;color:#000;font-weight:400;font-family:'Liberation Sans',sans-serif;letter-spacing:-0.2px">Windows (CR LF)</div><div class="t" style="left:1584px;top:1071.42px;font-size:12.5px;color:#000;font-weight:400;font-family:'Liberation Sans',sans-serif;letter-spacing:-0.2px">UTF-8</div><div class="t" style="left:1704px;top:1071.42px;font-size:12.5px;color:#000;font-weight:400;font-family:'Liberation Sans',sans-serif;letter-spacing:-0.2px">INS</div></body></html>
